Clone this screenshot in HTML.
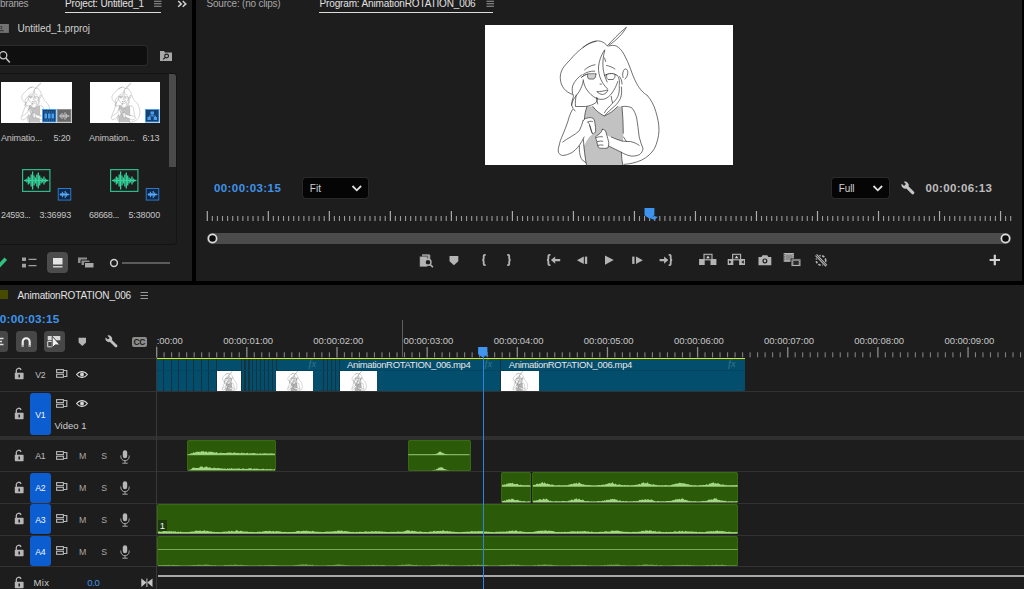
<!DOCTYPE html>
<html><head><meta charset="utf-8"><title>Premiere</title>
<style>
html,body{margin:0;padding:0;background:#1d1d1d;}
body{width:1024px;height:589px;overflow:hidden;position:relative;font-family:"Liberation Sans",sans-serif;}
#r{position:absolute;left:0;top:0;width:1024px;height:589px;overflow:hidden;background:#1d1d1d;}
#r div,#r svg,#r span{position:absolute;display:block;}
#r .t{white-space:nowrap;}
#r .c{overflow:hidden;}
</style></head><body><div id="r">
<div style="left:192px;top:0px;width:4px;height:283px;background:#000;"></div>
<div style="left:0px;top:281px;width:1024px;height:4px;background:#000;"></div>
<div style="left:1022px;top:0px;width:2px;height:283px;background:#000;"></div>
<span id="t1" class="t" style="left:-7.2px;top:-3.10px;font-size:10px;line-height:14px;color:#a6a6a6;font-weight:400;letter-spacing:-0.318px;">Libraries</span>
<span id="t2" class="t" style="left:65px;top:-3.10px;font-size:10px;line-height:14px;color:#e2e2e2;font-weight:400;letter-spacing:-0.143px;">Project: Untitled_1</span>
<div style="left:65px;top:11.6px;width:95.5px;height:1.5px;background:#dcdcdc;"></div>
<svg style="left:153.8px;top:0px;" width="8" height="8" viewBox="0 0 8 8"><path d="M0 1.300h7.500M0 3.800h7.500M0 6.300h7.500" stroke="#9a9a9a" stroke-width="1.100"/></svg>
<svg style="left:176px;top:0px;" width="12" height="9" viewBox="0 0 12 9"><path d="M2.200 1l3.100 2.900-3.100 2.900M6.700 1l3.100 2.900-3.100 2.900" stroke="#d0d0d0" stroke-width="1.500" fill="none"/></svg>
<svg style="left:-2px;top:24px;" width="11" height="9" viewBox="0 0 11 9"><path d="M0 0h10.900v8.900H0z" fill="#727272"/><path d="M2 6.700h3.800" stroke="#2a2a2a" stroke-width="0.900"/><path d="M2.300 2.500h1.500v2h-1.500" stroke="#2a2a2a" stroke-width="0.700" fill="none"/></svg>
<span id="t3" class="t" style="left:17.5px;top:22.30px;font-size:10px;line-height:14px;color:#cfcfcf;font-weight:400;letter-spacing:-0.051px;">Untitled_1.prproj</span>
<div style="left:-6px;top:46px;width:153px;height:19px;background:#0f0f0f;border-radius:3px;box-shadow:0 0 0 1px #2b2b2b;"></div>
<svg style="left:-1px;top:49.8px;" width="13" height="14" viewBox="0 0 13 14"><circle cx="4.2" cy="5.2" r="3.6" fill="none" stroke="#c8c8c8" stroke-width="1.3"/><path d="M6.8 8l4 4.4" stroke="#c8c8c8" stroke-width="1.5"/></svg>
<svg style="left:159.3px;top:49.6px;" width="14" height="12" viewBox="0 0 14 12"><path d="M1 1h4l1 1.5h7v8.5H1z" fill="#a8a8a8"/><circle cx="7.6" cy="6" r="1.9" fill="none" stroke="#1d1d1d" stroke-width="1.1"/><path d="M6.2 7.4l-2 2" stroke="#1d1d1d" stroke-width="1.2"/></svg>
<div style="left:-4px;top:73.2px;width:179.3px;height:170px;background:#1d1d1d;border:1px solid #131313;border-radius:0 3.5px 3.5px 0;"></div>
<div style="left:169px;top:74.2px;width:6.8px;height:93px;background:#4a4a4a;border-radius:0 3px 0 0;"></div>
<svg style="left:0.8px;top:82px;background:#fff;" width="71.2" height="41" viewBox="3 0 248 140"><rect width="248" height="140" fill="#fff"/>
<path d="M102 81.500c-1.500 4-2.500 8.500-2.500 12.700c-.800 7-1.300 13.500-1.300 20.400c.500 9 1.700 17 3.200 25.400h36.300c-.700-4.200-1.300-8.300-1.300-12.500c1.200-6.500 1.900-13 1.900-19.300c0-9-.500-18-1.300-26.700h-4.400c-3.500 4-8.200 7.300-13.400 9.500c-4.300-2.300-8.400-5.500-11.500-9.500z" fill="#c2c2c2"/>
<path d="M98.200 95.500c.800-1.500 2-2.200 3.500-2.300c2.300-.800 4.700-.800 6.500.200c1.200 1.500 1.700 3.500 1.800 5.500c.500 2.500.800 5 .600 7.500c-.500 1.300-1.500 2.200-2.800 2.500l-3.500 3l-3 4.500l-2.500 4.800l-2-9z" fill="#fff"/>
<path d="M117.300 104.500c1-.500 2.200 0 3 1.200c.800 1.500 1.200 3 1.500 4.500l4.400 1.800c3.500 1.500 7 3 10.800 4l1.800 2l-2.400 9.300c-4-2-8.500-4.200-12.700-6.300l-.900 2c-2 .500-4 .500-6 .200c-1.300.300-2.700 0-3.500-1c-.800-2-1.300-4-1.500-6c-.500-1.200-1-2.500-1.200-3.800c.300-1.200 1.200-2 2.500-2.500c1.200-.800 2.500-2 3.400-3.400z" fill="#fff"/>
<g fill="none" stroke="#787878" stroke-width="1.050" stroke-linecap="round" stroke-linejoin="round">
<!-- ahoge -->
<path d="M122.400 20.800c5-5.500 11.500-12.500 19-18.600c-3.500 6.500-9.500 12.500-17 17.800"/>
<!-- hair left outer -->
<path d="M122.400 21c-3.500-4.500-8-5.500-11.400-5c-5 .800-9.500 3.500-12.800 6.300c-5 3.800-9.200 7.800-12.700 12.100c-3.200 3.500-6 6.300-7.700 8.900c-2 3.500-2.700 7-2.500 10.200c.200 4 1.500 7.400 3.700 10.200c2 2.500 5 4.500 8.400 5.700"/>
<path d="M98.200 22.300c4-3 8-5 12.800-6"/>
<!-- hair right outer, long -->
<path d="M123.700 21c2.500-.800 5.500-.800 7.600 0c3 1.500 5.500 4.500 7.700 8.300c2.500 4.500 4.500 9.300 6.300 14c1.800 5.200 3.700 10.300 6.400 15.300c3 5.500 7 10 10.200 11.400c4 4.500 7.200 10.300 8.900 16.500c1.800 6 3.300 12.500 3.200 19.100c-.300 6.500-2 12.700-4.500 17.900c-3 5-7.500 8.800-12.700 11.500c-5.500 2.500-11.500 4-17.800 4.400"/>
<!-- fringe -->
<path d="M119.200 25.500c-3 4.500-5.200 10.500-5.700 16.500c-.200 4.500.700 8.800 2.500 12.700c1.500 3.500 3.800 6.500 6.400 9"/>
<path d="M119.800 25c-1.500 6-2.300 11.500-1.800 17.500c.500 5 2 10 4.200 14.500"/>
<path d="M119.500 33l1.200 3.500M121.500 40.500c3 .5 6 1.700 8.500 3.500"/>
<!-- brow arcs -->
<path d="M99.500 45c2.500-2.500 6-4.500 10.500-5.300M98.200 49.500c3-2.300 7-3.500 11.500-3.400"/>
<!-- face -->
<path d="M98.200 54.700c.500 4 1.800 7.500 3.800 10.300c2.500 3.500 5.500 6.300 9 8.200c2.500 1.200 5.500 1.500 8.500.800c3-1 5.500-3.300 7.500-6c2.500-3.500 4.500-7.500 5.800-11.500"/>
<!-- eyes -->
<path d="M96.500 52.300c2-1.800 4.500-3 7-3.300h7.500" stroke-width="1"/>
<path d="M102.800 49.500c-.700 1.700-.300 3.500 1 4.500h5c1.500-1 2.200-2.800 2-4.700" fill="#d0d0d0"/>
<path d="M119.500 50.500c2-1.300 4.500-2 7-2c2.500.2 4.800 1 6.500 2.700" stroke-width="0.900"/>
<path d="M121.700 50c-.500 1.800 0 3.500 1.300 4.500h5c1.500-.800 2.200-2.500 2-4.300"/>
<path d="M115 59l1.500.2"/>
<!-- mouth -->
<path d="M112.200 66.800c3.500-.2 7.200-.8 10.800-2c-.800 2.500-2.800 4.300-5.500 4.700c-2.200-.2-4-1.200-5.300-2.700z"/>
<!-- ear -->
<path d="M138 52.500c-.800-3-.300-6.500 1.500-8.200c1.500-1 3 .2 3.300 2.500c.2 2.500-.800 5.500-2.800 7.300"/>
<path d="M134.500 51.500c1.500 2 2.500 4.500 2.500 7.500M133.500 52.500c1 2.500 1.300 5 .8 7.500"/>
<!-- left hair locks -->
<path d="M97 49.700c-4 2.500-7.500 6.500-9.300 11c-1 3.500-.500 7 .800 10.500c-1 3-1.800 6-1.900 9c.8 2.300 2 4.300 3.400 5.800"/>
<path d="M98.200 56c-.500 3.500-2 7-3.800 10.200c-2 3-4 5.500-5.800 8c-1 2-1.800 4-2 6"/>
<path d="M91.200 70c-.700 3.800-1 7.700-.700 11.500h10.200c4-.5 7.800-2 10.300-3.900c.8-1.500 1.300-3 1.500-4.500"/>
<!-- neck -->
<path d="M111.600 72.500c.2 2.200.600 4.500 1.200 6.500M126.200 71.300c.2 2.200.600 4.300 1.300 6.300"/>
<!-- front strand over chest (double) -->
<path d="M136.400 62c.5 4 .3 8-1 11.500c-1.300 3-3.300 5.300-5.800 7.700c-3.500 3-7 6-9.800 9.200"/>
<path d="M134.300 61c.3 4-.200 7.500-1.500 10.500c-1.300 2.800-3.500 5.200-6 7.500c-2.800 2.700-5.500 5.500-7.400 8.800"/>
<!-- top outlines -->
<path d="M107.700 81.500c3 4 7.200 7.200 11.500 9.500c5.200-2.200 9.900-5.500 13.400-9.500"/>
<path d="M102 81.500c-1.500 4-2.500 8.500-2.500 12.700M137 81.500c.8 8.700 1.300 17.700 1.300 26.700"/>
<path d="M98.400 114.600c.5 9 1.600 17 3 25.200M136.400 127.300c0 4.200.6 8.300 1.300 12.500"/>
<!-- left arm -->
<path d="M87.400 84.600c-2 3.500-3.500 7.500-4.500 11.800c-1.500 4.500-3.300 9-5.100 13.300c-1.800 4-3.200 7.800-3.800 11.300c-.800 2.500-.900 4.700-.600 6.300c1 2 2.500 3 4.400 3.200c3.300-.2 6.500-1.500 9.600-3.200c3.500-2.500 6.700-6.200 9.200-10.500l2.500-4.800"/>
<path d="M98.200 95.500c-1 3.500-2.300 7-3.800 10.100c-2.500 2.500-5.500 4.500-8.800 6.300c-3 1.700-5.700 3.500-7.800 5.100"/>
<!-- left fist -->
<path d="M98.200 95.500c.8-1.500 2-2.200 3.500-2.300c2.300-.8 4.700-.8 6.500.2c1.200 1.500 1.700 3.500 1.800 5.500c.5 2.500.8 5 .6 7.500c-.5 1.300-1.500 2.200-2.800 2.500c-1-1.500-1.700-3.500-2-5.500c-.5-2.200-1.300-4.300-2.500-6"/>
<path d="M102.500 97c1.500-.8 3.500-1 5-.5M104.500 100.500l2.500 7.500"/>
<!-- right arm -->
<path d="M137.700 81.500c3-.5 6.200 0 8.900 1.200c2.500 2.500 4 6.200 5.100 10.300c1 6 1.700 12.500 2.500 19c1 4 2.400 8 3.800 11.500c-.2 2.700-1.700 4.800-3.800 6.300c-2.300 1-4.800 1.300-7.600 1.300c-3.500-.5-7-1.900-10.200-3.800c-4-2-8.500-4.200-12.700-6.300"/>
<path d="M126.200 112c3.500 1.500 7 3 10.800 4c3 .5 6 .5 8.800.6c3 .8 6 2 8.400 3.700M138.500 112l3 4.500"/>
<!-- right fist -->
<path d="M117.300 104.500c1-.5 2.200 0 3 1.200c.8 1.500 1.200 3 1.500 4.500c.8 2.500 1.500 5 2 7.500c0 2-.3 3.800-1 5.300c-2 .5-4 .5-6 .2c-1.300.3-2.700 0-3.500-1c-.8-2-1.300-4-1.500-6c-.5-1.200-1-2.500-1.200-3.800c.3-1.200 1.200-2 2.500-2.500c1.200-.8 2.500-2 3.400-3.400c.2-.8.500-1.500.8-2z"/>
<path d="M111.500 112.500c2-.8 4-1 6-.7M112.500 116.500c1.800-.5 3.600-.6 5.300-.3M113 120.300c1.700-.4 3.500-.5 5-.2"/>
<!-- hair behind left -->
<path d="M94.400 121c-.3 4.500.2 9 1.900 12.700c1.200 1.800 2.700 3 4.400 3.800"/>
</g>
</svg>
<svg style="left:89.6px;top:82px;background:#fff;" width="70.4" height="41" viewBox="-2 0 248 140"><rect width="248" height="140" fill="#fff"/>
<path d="M102 81.500c-1.500 4-2.500 8.500-2.500 12.700c-.800 7-1.300 13.500-1.300 20.400c.500 9 1.700 17 3.200 25.400h36.300c-.700-4.200-1.300-8.300-1.300-12.500c1.200-6.500 1.900-13 1.900-19.300c0-9-.500-18-1.300-26.700h-4.400c-3.500 4-8.200 7.300-13.400 9.500c-4.300-2.300-8.400-5.500-11.500-9.500z" fill="#c2c2c2"/>
<path d="M98.200 95.500c.800-1.500 2-2.200 3.500-2.300c2.300-.800 4.700-.800 6.500.200c1.200 1.500 1.700 3.500 1.800 5.500c.500 2.500.800 5 .600 7.500c-.500 1.300-1.500 2.200-2.800 2.500l-3.500 3l-3 4.500l-2.500 4.800l-2-9z" fill="#fff"/>
<path d="M117.300 104.500c1-.500 2.200 0 3 1.200c.800 1.500 1.200 3 1.500 4.500l4.400 1.800c3.500 1.500 7 3 10.800 4l1.800 2l-2.400 9.300c-4-2-8.500-4.200-12.700-6.300l-.900 2c-2 .500-4 .500-6 .200c-1.300.300-2.700 0-3.500-1c-.800-2-1.300-4-1.500-6c-.500-1.200-1-2.500-1.200-3.800c.300-1.200 1.200-2 2.500-2.500c1.200-.800 2.500-2 3.400-3.400z" fill="#fff"/>
<g fill="none" stroke="#787878" stroke-width="1.050" stroke-linecap="round" stroke-linejoin="round">
<!-- ahoge -->
<path d="M122.400 20.800c5-5.500 11.500-12.500 19-18.600c-3.500 6.500-9.500 12.500-17 17.800"/>
<!-- hair left outer -->
<path d="M122.400 21c-3.500-4.500-8-5.500-11.400-5c-5 .800-9.500 3.500-12.800 6.300c-5 3.800-9.200 7.800-12.700 12.100c-3.200 3.500-6 6.300-7.700 8.900c-2 3.500-2.700 7-2.500 10.200c.200 4 1.500 7.400 3.700 10.200c2 2.500 5 4.500 8.400 5.700"/>
<path d="M98.200 22.300c4-3 8-5 12.800-6"/>
<!-- hair right outer, long -->
<path d="M123.700 21c2.500-.800 5.500-.800 7.600 0c3 1.500 5.500 4.500 7.700 8.300c2.500 4.500 4.500 9.300 6.300 14c1.800 5.200 3.700 10.300 6.400 15.300c3 5.500 7 10 10.200 11.400c4 4.500 7.200 10.300 8.900 16.500c1.800 6 3.300 12.500 3.200 19.100c-.300 6.500-2 12.700-4.500 17.900c-3 5-7.500 8.800-12.700 11.500c-5.500 2.500-11.500 4-17.800 4.400"/>
<!-- fringe -->
<path d="M119.200 25.500c-3 4.500-5.200 10.500-5.700 16.500c-.200 4.500.700 8.800 2.500 12.700c1.500 3.500 3.800 6.500 6.400 9"/>
<path d="M119.800 25c-1.500 6-2.300 11.500-1.800 17.500c.500 5 2 10 4.200 14.500"/>
<path d="M119.500 33l1.200 3.500M121.500 40.500c3 .5 6 1.700 8.500 3.500"/>
<!-- brow arcs -->
<path d="M99.500 45c2.500-2.500 6-4.500 10.500-5.300M98.200 49.500c3-2.300 7-3.500 11.500-3.400"/>
<!-- face -->
<path d="M98.200 54.700c.500 4 1.800 7.500 3.800 10.300c2.500 3.500 5.500 6.300 9 8.200c2.500 1.200 5.500 1.500 8.500.800c3-1 5.500-3.300 7.500-6c2.500-3.500 4.500-7.500 5.800-11.500"/>
<!-- eyes -->
<path d="M96.500 52.300c2-1.800 4.500-3 7-3.300h7.500" stroke-width="1"/>
<path d="M102.800 49.500c-.700 1.700-.300 3.500 1 4.500h5c1.500-1 2.200-2.800 2-4.700" fill="#d0d0d0"/>
<path d="M119.500 50.500c2-1.300 4.500-2 7-2c2.500.2 4.800 1 6.500 2.700" stroke-width="0.900"/>
<path d="M121.700 50c-.500 1.800 0 3.500 1.300 4.500h5c1.500-.800 2.200-2.500 2-4.300"/>
<path d="M115 59l1.500.2"/>
<!-- mouth -->
<path d="M112.200 66.800c3.500-.2 7.200-.8 10.800-2c-.800 2.500-2.800 4.300-5.500 4.700c-2.200-.2-4-1.200-5.300-2.700z"/>
<!-- ear -->
<path d="M138 52.500c-.800-3-.300-6.500 1.500-8.200c1.500-1 3 .2 3.300 2.500c.2 2.500-.800 5.500-2.800 7.300"/>
<path d="M134.500 51.500c1.500 2 2.500 4.500 2.500 7.500M133.500 52.500c1 2.500 1.300 5 .8 7.500"/>
<!-- left hair locks -->
<path d="M97 49.700c-4 2.500-7.500 6.500-9.300 11c-1 3.500-.500 7 .800 10.500c-1 3-1.800 6-1.900 9c.8 2.300 2 4.300 3.400 5.800"/>
<path d="M98.200 56c-.500 3.500-2 7-3.800 10.200c-2 3-4 5.500-5.800 8c-1 2-1.800 4-2 6"/>
<path d="M91.200 70c-.700 3.800-1 7.700-.700 11.500h10.200c4-.5 7.800-2 10.300-3.900c.8-1.500 1.300-3 1.500-4.500"/>
<!-- neck -->
<path d="M111.600 72.500c.2 2.200.600 4.500 1.200 6.500M126.200 71.300c.2 2.200.600 4.300 1.300 6.300"/>
<!-- front strand over chest (double) -->
<path d="M136.400 62c.5 4 .3 8-1 11.500c-1.300 3-3.300 5.300-5.800 7.700c-3.500 3-7 6-9.800 9.200"/>
<path d="M134.300 61c.3 4-.200 7.500-1.500 10.500c-1.300 2.800-3.500 5.200-6 7.500c-2.800 2.700-5.500 5.500-7.400 8.800"/>
<!-- top outlines -->
<path d="M107.700 81.500c3 4 7.200 7.200 11.500 9.500c5.200-2.200 9.900-5.500 13.400-9.500"/>
<path d="M102 81.500c-1.500 4-2.500 8.500-2.500 12.700M137 81.500c.8 8.700 1.300 17.700 1.300 26.700"/>
<path d="M98.400 114.600c.5 9 1.600 17 3 25.200M136.400 127.300c0 4.200.6 8.300 1.300 12.500"/>
<!-- left arm -->
<path d="M87.400 84.600c-2 3.500-3.500 7.500-4.500 11.800c-1.500 4.500-3.300 9-5.100 13.300c-1.800 4-3.200 7.800-3.800 11.300c-.800 2.500-.900 4.700-.600 6.300c1 2 2.500 3 4.400 3.200c3.300-.2 6.500-1.500 9.600-3.200c3.500-2.500 6.700-6.200 9.200-10.500l2.500-4.800"/>
<path d="M98.200 95.500c-1 3.500-2.300 7-3.800 10.100c-2.500 2.500-5.500 4.500-8.800 6.300c-3 1.700-5.700 3.500-7.800 5.100"/>
<!-- left fist -->
<path d="M98.200 95.500c.8-1.500 2-2.200 3.500-2.300c2.300-.8 4.700-.8 6.500.2c1.200 1.500 1.700 3.500 1.800 5.500c.5 2.500.8 5 .6 7.500c-.5 1.300-1.500 2.200-2.800 2.500c-1-1.500-1.700-3.500-2-5.500c-.5-2.200-1.300-4.300-2.500-6"/>
<path d="M102.500 97c1.500-.8 3.500-1 5-.5M104.500 100.500l2.500 7.500"/>
<!-- right arm -->
<path d="M137.700 81.500c3-.5 6.200 0 8.900 1.200c2.500 2.500 4 6.200 5.100 10.300c1 6 1.700 12.500 2.500 19c1 4 2.400 8 3.800 11.500c-.2 2.700-1.700 4.800-3.800 6.300c-2.300 1-4.800 1.300-7.600 1.300c-3.500-.5-7-1.900-10.200-3.800c-4-2-8.500-4.200-12.700-6.300"/>
<path d="M126.200 112c3.500 1.500 7 3 10.800 4c3 .5 6 .5 8.800.6c3 .8 6 2 8.400 3.700M138.500 112l3 4.500"/>
<!-- right fist -->
<path d="M117.300 104.500c1-.5 2.200 0 3 1.200c.8 1.500 1.200 3 1.500 4.500c.8 2.500 1.500 5 2 7.500c0 2-.3 3.800-1 5.300c-2 .5-4 .5-6 .2c-1.300.3-2.700 0-3.500-1c-.8-2-1.300-4-1.500-6c-.5-1.200-1-2.500-1.200-3.800c.3-1.200 1.200-2 2.500-2.500c1.200-.8 2.500-2 3.400-3.400c.2-.8.500-1.500.8-2z"/>
<path d="M111.500 112.500c2-.8 4-1 6-.7M112.500 116.500c1.800-.5 3.600-.6 5.300-.3M113 120.300c1.700-.4 3.500-.5 5-.2"/>
<!-- hair behind left -->
<path d="M94.400 121c-.3 4.500.2 9 1.900 12.700c1.200 1.800 2.700 3 4.400 3.800"/>
</g>
</svg>
<svg style="left:42px;top:109px;" width="15" height="14" viewBox="0 0 15 14"><rect x="0.5" y="0.5" width="13.5" height="12.5" fill="#17406e" stroke="#4aa0f0" stroke-width="1"/><path d="M2.5 4.5h2.6v5h-2.6zM6 4.5h2.6v5H6zM9.5 4.5h2.6v5H9.5z" fill="#4aa0f0"/><path d="M2.5 3h9.6M2.5 11h9.6" stroke="#4aa0f0" stroke-width="0.8" stroke-dasharray="1.2 1"/></svg>
<svg style="left:57px;top:109px;" width="15" height="14" viewBox="0 0 15 14"><rect x="0.5" y="0.5" width="13.5" height="12.5" fill="#6a6a6a" stroke="#909090" stroke-width="1"/><path d="M2 7h10.5M3.5 5.5v3M5 4v6M6.5 5.5v3M8 3.2v7.6M9.5 4.8v4.4M11 6v2" stroke="#bdbdbd" stroke-width="1.1"/></svg>
<svg style="left:145px;top:109px;" width="15" height="14" viewBox="0 0 15 14"><rect x="0.5" y="0.5" width="13.5" height="12.5" fill="#17406e" stroke="#4aa0f0" stroke-width="1"/><path d="M5.5 2.5h3.5v3H5.5zM2.5 8h3.3v3H2.5zM8.7 8H12v3H8.7z" fill="#4aa0f0"/><path d="M7.2 5.5v1.5M4.2 8V7h6.2v1" stroke="#4aa0f0" stroke-width="0.9" fill="none"/></svg>
<span id="t4" class="t" style="left:1px;top:131.50px;font-size:9px;line-height:13px;color:#c4c4c4;font-weight:400;letter-spacing:-0.139px;">Animatio...</span>
<span id="t5" class="t" style="left:53.5px;top:131.50px;font-size:9px;line-height:13px;color:#c4c4c4;font-weight:400;letter-spacing:-0.133px;">5:20</span>
<span id="t6" class="t" style="left:89px;top:131.50px;font-size:9px;line-height:13px;color:#c4c4c4;font-weight:400;letter-spacing:-0.128px;">Animation...</span>
<span id="t7" class="t" style="left:142.5px;top:131.50px;font-size:9px;line-height:13px;color:#c4c4c4;font-weight:400;letter-spacing:-0.133px;">6:13</span>
<svg style="left:22px;top:169px;" width="29" height="23" viewBox="0 0 29 23"><rect x="0.6" y="0.6" width="27.3" height="21.8" fill="none" stroke="#2fb98a" stroke-width="1.2"/><path d="M3.50 10.5v2" stroke="#35d39c" stroke-width="1.3"/><path d="M4.92 9.5v4" stroke="#35d39c" stroke-width="1.3"/><path d="M6.34 7.5v8" stroke="#35d39c" stroke-width="1.3"/><path d="M7.76 8.5v6" stroke="#35d39c" stroke-width="1.3"/><path d="M9.18 5.5v12" stroke="#35d39c" stroke-width="1.3"/><path d="M10.60 2.5v18" stroke="#35d39c" stroke-width="1.3"/><path d="M12.02 6.5v10" stroke="#35d39c" stroke-width="1.3"/><path d="M13.44 8.5v6" stroke="#35d39c" stroke-width="1.3"/><path d="M14.86 5.5v12" stroke="#35d39c" stroke-width="1.3"/><path d="M16.28 3.5v16" stroke="#35d39c" stroke-width="1.3"/><path d="M17.70 6.5v10" stroke="#35d39c" stroke-width="1.3"/><path d="M19.12 8.5v6" stroke="#35d39c" stroke-width="1.3"/><path d="M20.54 9.5v4" stroke="#35d39c" stroke-width="1.3"/><path d="M21.96 7.5v8" stroke="#35d39c" stroke-width="1.3"/><path d="M23.38 9.5v4" stroke="#35d39c" stroke-width="1.3"/><path d="M24.80 10.5v2" stroke="#35d39c" stroke-width="1.3"/><path d="M2 11.5h24.5" stroke="#35d39c" stroke-width="1"/></svg>
<svg style="left:110px;top:169px;" width="29" height="23" viewBox="0 0 29 23"><rect x="0.6" y="0.6" width="27.3" height="21.8" fill="none" stroke="#2fb98a" stroke-width="1.2"/><path d="M3.50 10.5v2" stroke="#35d39c" stroke-width="1.3"/><path d="M4.92 9.5v4" stroke="#35d39c" stroke-width="1.3"/><path d="M6.34 7.5v8" stroke="#35d39c" stroke-width="1.3"/><path d="M7.76 8.5v6" stroke="#35d39c" stroke-width="1.3"/><path d="M9.18 5.5v12" stroke="#35d39c" stroke-width="1.3"/><path d="M10.60 2.5v18" stroke="#35d39c" stroke-width="1.3"/><path d="M12.02 6.5v10" stroke="#35d39c" stroke-width="1.3"/><path d="M13.44 8.5v6" stroke="#35d39c" stroke-width="1.3"/><path d="M14.86 5.5v12" stroke="#35d39c" stroke-width="1.3"/><path d="M16.28 3.5v16" stroke="#35d39c" stroke-width="1.3"/><path d="M17.70 6.5v10" stroke="#35d39c" stroke-width="1.3"/><path d="M19.12 8.5v6" stroke="#35d39c" stroke-width="1.3"/><path d="M20.54 9.5v4" stroke="#35d39c" stroke-width="1.3"/><path d="M21.96 7.5v8" stroke="#35d39c" stroke-width="1.3"/><path d="M23.38 9.5v4" stroke="#35d39c" stroke-width="1.3"/><path d="M24.80 10.5v2" stroke="#35d39c" stroke-width="1.3"/><path d="M2 11.5h24.5" stroke="#35d39c" stroke-width="1"/></svg>
<svg style="left:56.8px;top:187.5px;" width="15" height="13" viewBox="0 0 14.5 14"><rect x="0.5" y="0.5" width="13.5" height="12.5" fill="#0c2748" stroke="#2f7fd6" stroke-width="1"/><path d="M2 7h10.5M3.5 5.5v3M5 4v6M6.5 5.5v3M8 3.2v7.6M9.5 4.8v4.4M11 6v2" stroke="#5aa8f5" stroke-width="1.1"/></svg>
<svg style="left:145.3px;top:187.5px;" width="15" height="13" viewBox="0 0 14.5 14"><rect x="0.5" y="0.5" width="13.5" height="12.5" fill="#0c2748" stroke="#2f7fd6" stroke-width="1"/><path d="M2 7h10.5M3.5 5.5v3M5 4v6M6.5 5.5v3M8 3.2v7.6M9.5 4.8v4.4M11 6v2" stroke="#5aa8f5" stroke-width="1.1"/></svg>
<span id="t8" class="t" style="left:1px;top:208.50px;font-size:9px;line-height:13px;color:#c4c4c4;font-weight:400;letter-spacing:-0.379px;">24593...</span>
<span id="t9" class="t" style="left:39.5px;top:208.50px;font-size:9px;line-height:13px;color:#c4c4c4;font-weight:400;letter-spacing:-0.150px;">3:36993</span>
<span id="t10" class="t" style="left:89px;top:208.50px;font-size:9px;line-height:13px;color:#c4c4c4;font-weight:400;letter-spacing:-0.316px;">68668...</span>
<span id="t11" class="t" style="left:128.5px;top:208.50px;font-size:9px;line-height:13px;color:#c4c4c4;font-weight:400;letter-spacing:-0.150px;">5:38000</span>
<svg style="left:-4px;top:254.5px;" width="13" height="14" viewBox="0 0 13 14"><path d="M0 11.500L8.500 2.500l2.600 2.500L3 13.500z" fill="#2ec27e"/></svg>
<svg style="left:22px;top:257px;" width="16" height="12" viewBox="0 0 16 12"><path d="M0 0.5h4v3.6H0zM0 6.8h4v3.6H0z" fill="#a0a0a0"/><path d="M6.5 2.3h8M6.5 8.6h8" stroke="#a0a0a0" stroke-width="1.3"/></svg>
<div style="left:47.3px;top:252.3px;width:21px;height:20.8px;background:#4c4c4c;border-radius:4px;"></div>
<svg style="left:52px;top:258px;" width="12" height="11" viewBox="0 0 12 11"><path d="M1 0h9.5v6.5H1z" fill="#e4e4e4"/><path d="M1 8.8h9.5" stroke="#e4e4e4" stroke-width="1.3"/></svg>
<svg style="left:78px;top:257px;" width="17" height="12" viewBox="0 0 17 12"><path d="M0 0.5h9v5.5H0z" fill="#8e8e8e"/><path d="M3 3h9v5.5H3z" fill="#8e8e8e" stroke="#1d1d1d" stroke-width="1"/><path d="M6.5 5.5h9.5V11H6.5z" fill="#a8a8a8" stroke="#1d1d1d" stroke-width="1"/></svg>
<div style="left:122px;top:262.3px;width:48px;height:1.4px;background:#5c5c5c;"></div>
<svg style="left:109px;top:258px;" width="10" height="10" viewBox="0 0 10 10"><circle cx="5" cy="5" r="3.4" fill="#1d1d1d" stroke="#cfcfcf" stroke-width="1.5"/></svg>
<span id="t12" class="t" style="left:206.5px;top:-3.10px;font-size:10px;line-height:14px;color:#a6a6a6;font-weight:400;letter-spacing:-0.212px;">Source: (no clips)</span>
<span id="t13" class="t" style="left:319.5px;top:-3.10px;font-size:10px;line-height:14px;color:#e2e2e2;font-weight:400;letter-spacing:-0.142px;">Program: AnimationROTATION_006</span>
<div style="left:319px;top:11.6px;width:174px;height:1.5px;background:#dcdcdc;"></div>
<svg style="left:486px;top:0px;" width="9" height="8" viewBox="0 0 9 8"><path d="M0.500 1.300h7.500M0.500 3.800h7.500M0.500 6.300h7.500" stroke="#9a9a9a" stroke-width="1.100"/></svg>
<svg style="left:485px;top:25px;" width="248" height="140" viewBox="0 0 248 140"><rect width="248" height="140" fill="#fff"/>
<path d="M102 81.500c-1.500 4-2.500 8.500-2.500 12.700c-.800 7-1.300 13.500-1.300 20.400c.500 9 1.700 17 3.200 25.400h36.300c-.700-4.200-1.300-8.300-1.300-12.500c1.200-6.500 1.900-13 1.900-19.300c0-9-.500-18-1.300-26.700h-4.400c-3.500 4-8.200 7.300-13.400 9.500c-4.300-2.300-8.400-5.500-11.500-9.500z" fill="#c2c2c2"/>
<path d="M98.200 95.500c.800-1.500 2-2.200 3.500-2.300c2.300-.800 4.700-.800 6.500.200c1.200 1.500 1.700 3.500 1.800 5.500c.500 2.500.800 5 .600 7.500c-.500 1.300-1.500 2.200-2.800 2.500l-3.500 3l-3 4.500l-2.500 4.800l-2-9z" fill="#fff"/>
<path d="M117.300 104.500c1-.500 2.200 0 3 1.200c.800 1.500 1.200 3 1.500 4.500l4.400 1.800c3.500 1.500 7 3 10.800 4l1.800 2l-2.400 9.300c-4-2-8.500-4.200-12.700-6.300l-.900 2c-2 .500-4 .500-6 .200c-1.300.300-2.700 0-3.500-1c-.800-2-1.300-4-1.500-6c-.500-1.200-1-2.500-1.200-3.800c.300-1.200 1.200-2 2.500-2.500c1.200-.800 2.500-2 3.400-3.400z" fill="#fff"/>
<g fill="none" stroke="#2e2e2e" stroke-width="0.680" stroke-linecap="round" stroke-linejoin="round">
<!-- ahoge -->
<path d="M122.400 20.800c5-5.500 11.500-12.500 19-18.600c-3.500 6.500-9.500 12.500-17 17.800"/>
<!-- hair left outer -->
<path d="M122.400 21c-3.500-4.500-8-5.500-11.400-5c-5 .800-9.500 3.500-12.800 6.300c-5 3.800-9.200 7.800-12.700 12.100c-3.200 3.500-6 6.300-7.700 8.900c-2 3.500-2.700 7-2.500 10.200c.200 4 1.500 7.400 3.700 10.200c2 2.500 5 4.500 8.400 5.700"/>
<path d="M98.200 22.300c4-3 8-5 12.800-6"/>
<!-- hair right outer, long -->
<path d="M123.700 21c2.500-.800 5.500-.800 7.600 0c3 1.500 5.500 4.500 7.700 8.300c2.500 4.500 4.500 9.300 6.300 14c1.800 5.200 3.700 10.300 6.400 15.300c3 5.500 7 10 10.200 11.400c4 4.500 7.200 10.300 8.900 16.500c1.800 6 3.300 12.500 3.200 19.100c-.300 6.500-2 12.700-4.500 17.900c-3 5-7.500 8.800-12.700 11.500c-5.500 2.500-11.500 4-17.800 4.400"/>
<!-- fringe -->
<path d="M119.200 25.500c-3 4.500-5.200 10.500-5.700 16.500c-.200 4.500.700 8.800 2.500 12.700c1.500 3.500 3.800 6.500 6.400 9"/>
<path d="M119.800 25c-1.500 6-2.300 11.500-1.800 17.500c.500 5 2 10 4.200 14.500"/>
<path d="M119.500 33l1.200 3.500M121.500 40.500c3 .5 6 1.700 8.500 3.500"/>
<!-- brow arcs -->
<path d="M99.500 45c2.500-2.500 6-4.500 10.500-5.300M98.200 49.500c3-2.300 7-3.500 11.500-3.400"/>
<!-- face -->
<path d="M98.200 54.700c.500 4 1.800 7.500 3.800 10.300c2.500 3.500 5.500 6.300 9 8.200c2.500 1.200 5.500 1.500 8.500.800c3-1 5.500-3.300 7.500-6c2.500-3.500 4.500-7.500 5.800-11.500"/>
<!-- eyes -->
<path d="M96.500 52.300c2-1.800 4.500-3 7-3.300h7.500" stroke-width="1"/>
<path d="M102.800 49.500c-.700 1.700-.300 3.500 1 4.500h5c1.500-1 2.200-2.800 2-4.700" fill="#d0d0d0"/>
<path d="M119.500 50.500c2-1.300 4.500-2 7-2c2.500.2 4.800 1 6.500 2.700" stroke-width="0.900"/>
<path d="M121.700 50c-.500 1.800 0 3.500 1.300 4.500h5c1.500-.800 2.200-2.500 2-4.300"/>
<path d="M115 59l1.500.2"/>
<!-- mouth -->
<path d="M112.200 66.800c3.500-.2 7.200-.8 10.800-2c-.800 2.500-2.800 4.300-5.500 4.700c-2.200-.2-4-1.200-5.300-2.700z"/>
<!-- ear -->
<path d="M138 52.500c-.800-3-.300-6.500 1.500-8.200c1.500-1 3 .2 3.300 2.500c.2 2.500-.800 5.500-2.800 7.300"/>
<path d="M134.500 51.500c1.500 2 2.500 4.500 2.500 7.500M133.500 52.500c1 2.500 1.300 5 .8 7.500"/>
<!-- left hair locks -->
<path d="M97 49.700c-4 2.500-7.500 6.500-9.300 11c-1 3.500-.500 7 .800 10.500c-1 3-1.800 6-1.900 9c.8 2.300 2 4.300 3.400 5.800"/>
<path d="M98.200 56c-.500 3.500-2 7-3.800 10.200c-2 3-4 5.500-5.800 8c-1 2-1.800 4-2 6"/>
<path d="M91.200 70c-.700 3.800-1 7.700-.700 11.500h10.200c4-.5 7.800-2 10.300-3.900c.8-1.500 1.300-3 1.500-4.500"/>
<!-- neck -->
<path d="M111.600 72.500c.2 2.200.600 4.500 1.200 6.500M126.200 71.300c.2 2.200.600 4.300 1.300 6.300"/>
<!-- front strand over chest (double) -->
<path d="M136.400 62c.5 4 .3 8-1 11.500c-1.300 3-3.300 5.300-5.800 7.700c-3.500 3-7 6-9.800 9.200"/>
<path d="M134.300 61c.3 4-.200 7.500-1.500 10.500c-1.300 2.800-3.500 5.200-6 7.500c-2.800 2.700-5.500 5.500-7.400 8.800"/>
<!-- top outlines -->
<path d="M107.700 81.500c3 4 7.200 7.200 11.500 9.500c5.200-2.200 9.900-5.500 13.400-9.500"/>
<path d="M102 81.500c-1.500 4-2.500 8.500-2.500 12.700M137 81.500c.8 8.700 1.300 17.700 1.300 26.700"/>
<path d="M98.400 114.600c.5 9 1.600 17 3 25.200M136.400 127.300c0 4.200.6 8.300 1.300 12.500"/>
<!-- left arm -->
<path d="M87.400 84.600c-2 3.500-3.500 7.500-4.500 11.800c-1.500 4.500-3.300 9-5.100 13.300c-1.800 4-3.200 7.800-3.800 11.300c-.800 2.500-.900 4.700-.600 6.300c1 2 2.500 3 4.400 3.200c3.300-.2 6.500-1.500 9.600-3.200c3.500-2.500 6.700-6.200 9.200-10.500l2.500-4.800"/>
<path d="M98.200 95.500c-1 3.500-2.300 7-3.800 10.100c-2.500 2.500-5.500 4.500-8.800 6.300c-3 1.700-5.700 3.500-7.800 5.100"/>
<!-- left fist -->
<path d="M98.200 95.500c.8-1.500 2-2.200 3.500-2.300c2.300-.8 4.700-.8 6.500.2c1.200 1.500 1.700 3.500 1.800 5.500c.5 2.500.8 5 .6 7.500c-.5 1.300-1.500 2.200-2.800 2.500c-1-1.500-1.700-3.500-2-5.500c-.5-2.200-1.300-4.300-2.500-6"/>
<path d="M102.500 97c1.500-.8 3.500-1 5-.5M104.500 100.500l2.500 7.500"/>
<!-- right arm -->
<path d="M137.700 81.500c3-.5 6.200 0 8.900 1.200c2.500 2.500 4 6.200 5.100 10.300c1 6 1.700 12.500 2.500 19c1 4 2.400 8 3.800 11.500c-.2 2.700-1.700 4.800-3.800 6.300c-2.300 1-4.800 1.300-7.600 1.300c-3.500-.5-7-1.900-10.200-3.800c-4-2-8.500-4.200-12.700-6.300"/>
<path d="M126.200 112c3.500 1.500 7 3 10.800 4c3 .5 6 .5 8.800.6c3 .8 6 2 8.400 3.700M138.500 112l3 4.500"/>
<!-- right fist -->
<path d="M117.300 104.500c1-.5 2.200 0 3 1.200c.8 1.500 1.200 3 1.500 4.500c.8 2.500 1.500 5 2 7.500c0 2-.3 3.800-1 5.300c-2 .5-4 .5-6 .2c-1.300.3-2.700 0-3.500-1c-.8-2-1.300-4-1.500-6c-.5-1.200-1-2.500-1.200-3.800c.3-1.200 1.200-2 2.500-2.500c1.200-.8 2.500-2 3.400-3.400c.2-.8.500-1.500.8-2z"/>
<path d="M111.500 112.500c2-.8 4-1 6-.7M112.500 116.500c1.800-.5 3.600-.6 5.300-.3M113 120.300c1.700-.4 3.500-.5 5-.2"/>
<!-- hair behind left -->
<path d="M94.400 121c-.3 4.500.2 9 1.900 12.700c1.200 1.800 2.700 3 4.400 3.800"/>
</g>
</svg>
<span id="t14" class="t" style="left:214px;top:180.95px;font-size:11.5px;line-height:15.5px;color:#3f94ea;font-weight:700;letter-spacing:0.413px;">00:00:03:15</span>
<div style="left:302.5px;top:178.2px;width:65.7px;height:19.8px;background:#050505;border-radius:3px;box-shadow:0 0 0 1px #2a2a2a;"></div>
<span id="t15" class="t" style="left:309.8px;top:181.60px;font-size:10px;line-height:14px;color:#d0d0d0;font-weight:400;letter-spacing:0.097px;">Fit</span>
<svg style="left:351px;top:184px;" width="12" height="9" viewBox="0 0 12 9"><path d="M1.5 2l4.3 4.3L10.1 2" stroke="#e0e0e0" stroke-width="1.8" fill="none"/></svg>
<div style="left:831.5px;top:178.2px;width:57.5px;height:19.8px;background:#050505;border-radius:3px;box-shadow:0 0 0 1px #2a2a2a;"></div>
<span id="t16" class="t" style="left:838.7px;top:181.60px;font-size:10px;line-height:14px;color:#d0d0d0;font-weight:400;letter-spacing:-0.081px;">Full</span>
<svg style="left:871.5px;top:184px;" width="12" height="9" viewBox="0 0 12 9"><path d="M1.5 2l4.3 4.3L10.1 2" stroke="#e0e0e0" stroke-width="1.8" fill="none"/></svg>
<svg style="left:900.5px;top:181px;" width="14" height="14" viewBox="0 0 14 14"><g transform="rotate(-45 7 7)"><circle cx="7" cy="2.9" r="3.5" fill="#c6c6c6"/><rect x="5.500" y="4" width="3" height="11.300" rx="1.400" fill="#c6c6c6"/><rect x="5.700" y="-1.500" width="2.600" height="4.300" fill="#1d1d1d"/></g></svg>
<span id="t17" class="t" style="left:925.5px;top:180.95px;font-size:11.5px;line-height:15.5px;color:#bdbdbd;font-weight:700;letter-spacing:0.377px;">00:00:06:13</span>
<svg style="left:0px;top:0px;" width="1024" height="230" viewBox="0 0 1024 230"><rect x="206.70" y="211" width="1.200" height="10" fill="#ababab"/><rect x="211.79" y="216" width="1.100" height="5" fill="#9a9a9a"/><rect x="216.87" y="216" width="1.100" height="5" fill="#9a9a9a"/><rect x="221.96" y="216" width="1.100" height="5" fill="#9a9a9a"/><rect x="227.04" y="216" width="1.100" height="5" fill="#9a9a9a"/><rect x="232.13" y="216" width="1.100" height="5" fill="#9a9a9a"/><rect x="237.21" y="216" width="1.100" height="5" fill="#9a9a9a"/><rect x="242.30" y="216" width="1.100" height="5" fill="#9a9a9a"/><rect x="247.38" y="216" width="1.100" height="5" fill="#9a9a9a"/><rect x="252.47" y="216" width="1.100" height="5" fill="#9a9a9a"/><rect x="257.55" y="216" width="1.100" height="5" fill="#9a9a9a"/><rect x="262.63" y="216" width="1.100" height="5" fill="#9a9a9a"/><rect x="267.72" y="211" width="1.200" height="10" fill="#ababab"/><rect x="272.81" y="216" width="1.100" height="5" fill="#9a9a9a"/><rect x="277.89" y="216" width="1.100" height="5" fill="#9a9a9a"/><rect x="282.98" y="216" width="1.100" height="5" fill="#9a9a9a"/><rect x="288.06" y="216" width="1.100" height="5" fill="#9a9a9a"/><rect x="293.14" y="216" width="1.100" height="5" fill="#9a9a9a"/><rect x="298.23" y="216" width="1.100" height="5" fill="#9a9a9a"/><rect x="303.31" y="216" width="1.100" height="5" fill="#9a9a9a"/><rect x="308.40" y="216" width="1.100" height="5" fill="#9a9a9a"/><rect x="313.49" y="216" width="1.100" height="5" fill="#9a9a9a"/><rect x="318.57" y="216" width="1.100" height="5" fill="#9a9a9a"/><rect x="323.65" y="216" width="1.100" height="5" fill="#9a9a9a"/><rect x="328.74" y="211" width="1.200" height="10" fill="#ababab"/><rect x="333.82" y="216" width="1.100" height="5" fill="#9a9a9a"/><rect x="338.91" y="216" width="1.100" height="5" fill="#9a9a9a"/><rect x="344.00" y="216" width="1.100" height="5" fill="#9a9a9a"/><rect x="349.08" y="216" width="1.100" height="5" fill="#9a9a9a"/><rect x="354.16" y="216" width="1.100" height="5" fill="#9a9a9a"/><rect x="359.25" y="216" width="1.100" height="5" fill="#9a9a9a"/><rect x="364.33" y="216" width="1.100" height="5" fill="#9a9a9a"/><rect x="369.42" y="216" width="1.100" height="5" fill="#9a9a9a"/><rect x="374.50" y="216" width="1.100" height="5" fill="#9a9a9a"/><rect x="379.59" y="216" width="1.100" height="5" fill="#9a9a9a"/><rect x="384.67" y="216" width="1.100" height="5" fill="#9a9a9a"/><rect x="389.76" y="211" width="1.200" height="10" fill="#ababab"/><rect x="394.85" y="216" width="1.100" height="5" fill="#9a9a9a"/><rect x="399.93" y="216" width="1.100" height="5" fill="#9a9a9a"/><rect x="405.01" y="216" width="1.100" height="5" fill="#9a9a9a"/><rect x="410.10" y="216" width="1.100" height="5" fill="#9a9a9a"/><rect x="415.18" y="216" width="1.100" height="5" fill="#9a9a9a"/><rect x="420.27" y="216" width="1.100" height="5" fill="#9a9a9a"/><rect x="425.36" y="216" width="1.100" height="5" fill="#9a9a9a"/><rect x="430.44" y="216" width="1.100" height="5" fill="#9a9a9a"/><rect x="435.52" y="216" width="1.100" height="5" fill="#9a9a9a"/><rect x="440.61" y="216" width="1.100" height="5" fill="#9a9a9a"/><rect x="445.69" y="216" width="1.100" height="5" fill="#9a9a9a"/><rect x="450.78" y="211" width="1.200" height="10" fill="#ababab"/><rect x="455.87" y="216" width="1.100" height="5" fill="#9a9a9a"/><rect x="460.95" y="216" width="1.100" height="5" fill="#9a9a9a"/><rect x="466.03" y="216" width="1.100" height="5" fill="#9a9a9a"/><rect x="471.12" y="216" width="1.100" height="5" fill="#9a9a9a"/><rect x="476.20" y="216" width="1.100" height="5" fill="#9a9a9a"/><rect x="481.29" y="216" width="1.100" height="5" fill="#9a9a9a"/><rect x="486.38" y="216" width="1.100" height="5" fill="#9a9a9a"/><rect x="491.46" y="216" width="1.100" height="5" fill="#9a9a9a"/><rect x="496.54" y="216" width="1.100" height="5" fill="#9a9a9a"/><rect x="501.63" y="216" width="1.100" height="5" fill="#9a9a9a"/><rect x="506.71" y="216" width="1.100" height="5" fill="#9a9a9a"/><rect x="511.80" y="211" width="1.200" height="10" fill="#ababab"/><rect x="516.88" y="216" width="1.100" height="5" fill="#9a9a9a"/><rect x="521.97" y="216" width="1.100" height="5" fill="#9a9a9a"/><rect x="527.05" y="216" width="1.100" height="5" fill="#9a9a9a"/><rect x="532.14" y="216" width="1.100" height="5" fill="#9a9a9a"/><rect x="537.23" y="216" width="1.100" height="5" fill="#9a9a9a"/><rect x="542.31" y="216" width="1.100" height="5" fill="#9a9a9a"/><rect x="547.39" y="216" width="1.100" height="5" fill="#9a9a9a"/><rect x="552.48" y="216" width="1.100" height="5" fill="#9a9a9a"/><rect x="557.56" y="216" width="1.100" height="5" fill="#9a9a9a"/><rect x="562.65" y="216" width="1.100" height="5" fill="#9a9a9a"/><rect x="567.74" y="216" width="1.100" height="5" fill="#9a9a9a"/><rect x="572.82" y="211" width="1.200" height="10" fill="#ababab"/><rect x="577.90" y="216" width="1.100" height="5" fill="#9a9a9a"/><rect x="582.99" y="216" width="1.100" height="5" fill="#9a9a9a"/><rect x="588.07" y="216" width="1.100" height="5" fill="#9a9a9a"/><rect x="593.16" y="216" width="1.100" height="5" fill="#9a9a9a"/><rect x="598.25" y="216" width="1.100" height="5" fill="#9a9a9a"/><rect x="603.33" y="216" width="1.100" height="5" fill="#9a9a9a"/><rect x="608.41" y="216" width="1.100" height="5" fill="#9a9a9a"/><rect x="613.50" y="216" width="1.100" height="5" fill="#9a9a9a"/><rect x="618.58" y="216" width="1.100" height="5" fill="#9a9a9a"/><rect x="623.67" y="216" width="1.100" height="5" fill="#9a9a9a"/><rect x="628.75" y="216" width="1.100" height="5" fill="#9a9a9a"/><rect x="633.84" y="211" width="1.200" height="10" fill="#ababab"/><rect x="638.93" y="216" width="1.100" height="5" fill="#9a9a9a"/><rect x="644.01" y="216" width="1.100" height="5" fill="#9a9a9a"/><rect x="649.09" y="216" width="1.100" height="5" fill="#9a9a9a"/><rect x="654.18" y="216" width="1.100" height="5" fill="#9a9a9a"/><rect x="659.26" y="216" width="1.100" height="5" fill="#9a9a9a"/><rect x="664.35" y="216" width="1.100" height="5" fill="#9a9a9a"/><rect x="669.44" y="216" width="1.100" height="5" fill="#9a9a9a"/><rect x="674.52" y="216" width="1.100" height="5" fill="#9a9a9a"/><rect x="679.60" y="216" width="1.100" height="5" fill="#9a9a9a"/><rect x="684.69" y="216" width="1.100" height="5" fill="#9a9a9a"/><rect x="689.77" y="216" width="1.100" height="5" fill="#9a9a9a"/><rect x="694.86" y="211" width="1.200" height="10" fill="#ababab"/><rect x="699.95" y="216" width="1.100" height="5" fill="#9a9a9a"/><rect x="705.03" y="216" width="1.100" height="5" fill="#9a9a9a"/><rect x="710.12" y="216" width="1.100" height="5" fill="#9a9a9a"/><rect x="715.20" y="216" width="1.100" height="5" fill="#9a9a9a"/><rect x="720.28" y="216" width="1.100" height="5" fill="#9a9a9a"/><rect x="725.37" y="216" width="1.100" height="5" fill="#9a9a9a"/><rect x="730.46" y="216" width="1.100" height="5" fill="#9a9a9a"/><rect x="735.54" y="216" width="1.100" height="5" fill="#9a9a9a"/><rect x="740.62" y="216" width="1.100" height="5" fill="#9a9a9a"/><rect x="745.71" y="216" width="1.100" height="5" fill="#9a9a9a"/><rect x="750.79" y="216" width="1.100" height="5" fill="#9a9a9a"/><rect x="755.88" y="211" width="1.200" height="10" fill="#ababab"/><rect x="760.97" y="216" width="1.100" height="5" fill="#9a9a9a"/><rect x="766.05" y="216" width="1.100" height="5" fill="#9a9a9a"/><rect x="771.13" y="216" width="1.100" height="5" fill="#9a9a9a"/><rect x="776.22" y="216" width="1.100" height="5" fill="#9a9a9a"/><rect x="781.30" y="216" width="1.100" height="5" fill="#9a9a9a"/><rect x="786.39" y="216" width="1.100" height="5" fill="#9a9a9a"/><rect x="791.48" y="216" width="1.100" height="5" fill="#9a9a9a"/><rect x="796.56" y="216" width="1.100" height="5" fill="#9a9a9a"/><rect x="801.65" y="216" width="1.100" height="5" fill="#9a9a9a"/><rect x="806.73" y="216" width="1.100" height="5" fill="#9a9a9a"/><rect x="811.81" y="216" width="1.100" height="5" fill="#9a9a9a"/><rect x="816.90" y="211" width="1.200" height="10" fill="#ababab"/><rect x="821.99" y="216" width="1.100" height="5" fill="#9a9a9a"/><rect x="827.07" y="216" width="1.100" height="5" fill="#9a9a9a"/><rect x="832.16" y="216" width="1.100" height="5" fill="#9a9a9a"/><rect x="837.24" y="216" width="1.100" height="5" fill="#9a9a9a"/><rect x="842.32" y="216" width="1.100" height="5" fill="#9a9a9a"/><rect x="847.41" y="216" width="1.100" height="5" fill="#9a9a9a"/><rect x="852.50" y="216" width="1.100" height="5" fill="#9a9a9a"/><rect x="857.58" y="216" width="1.100" height="5" fill="#9a9a9a"/><rect x="862.67" y="216" width="1.100" height="5" fill="#9a9a9a"/><rect x="867.75" y="216" width="1.100" height="5" fill="#9a9a9a"/><rect x="872.83" y="216" width="1.100" height="5" fill="#9a9a9a"/><rect x="877.92" y="211" width="1.200" height="10" fill="#ababab"/><rect x="883.00" y="216" width="1.100" height="5" fill="#9a9a9a"/><rect x="888.09" y="216" width="1.100" height="5" fill="#9a9a9a"/><rect x="893.18" y="216" width="1.100" height="5" fill="#9a9a9a"/><rect x="898.26" y="216" width="1.100" height="5" fill="#9a9a9a"/><rect x="903.34" y="216" width="1.100" height="5" fill="#9a9a9a"/><rect x="908.43" y="216" width="1.100" height="5" fill="#9a9a9a"/><rect x="913.51" y="216" width="1.100" height="5" fill="#9a9a9a"/><rect x="918.60" y="216" width="1.100" height="5" fill="#9a9a9a"/><rect x="923.69" y="216" width="1.100" height="5" fill="#9a9a9a"/><rect x="928.77" y="216" width="1.100" height="5" fill="#9a9a9a"/><rect x="933.85" y="216" width="1.100" height="5" fill="#9a9a9a"/><rect x="938.94" y="211" width="1.200" height="10" fill="#ababab"/><rect x="944.02" y="216" width="1.100" height="5" fill="#9a9a9a"/><rect x="949.11" y="216" width="1.100" height="5" fill="#9a9a9a"/><rect x="954.20" y="216" width="1.100" height="5" fill="#9a9a9a"/><rect x="959.28" y="216" width="1.100" height="5" fill="#9a9a9a"/><rect x="964.36" y="216" width="1.100" height="5" fill="#9a9a9a"/><rect x="969.45" y="216" width="1.100" height="5" fill="#9a9a9a"/><rect x="974.53" y="216" width="1.100" height="5" fill="#9a9a9a"/><rect x="979.62" y="216" width="1.100" height="5" fill="#9a9a9a"/><rect x="984.71" y="216" width="1.100" height="5" fill="#9a9a9a"/><rect x="989.79" y="216" width="1.100" height="5" fill="#9a9a9a"/><rect x="994.87" y="216" width="1.100" height="5" fill="#9a9a9a"/><rect x="999.96" y="211" width="1.200" height="10" fill="#ababab"/><rect x="1005.04" y="216" width="1.100" height="5" fill="#9a9a9a"/><rect x="1010.13" y="216" width="1.100" height="5" fill="#9a9a9a"/></svg>
<svg style="left:644px;top:207px;" width="15" height="14" viewBox="0 0 15 14"><path d="M0.500 1h9.900v7.300L5.500 11.800 0.500 8.300z" fill="#3d93ee"/><path d="M7.300 9.300l6.700.500-3.500 3.200-3.700-1.500z" fill="#3d93ee"/></svg>
<div style="left:207px;top:233px;width:804px;height:11px;background:#4b4b4b;border-radius:5.5px;"></div>
<svg style="left:207px;top:233px;" width="11" height="11" viewBox="0 0 11 11"><circle cx="5.5" cy="5.5" r="4.1" fill="#0c0c0c" stroke="#dcdcdc" stroke-width="1.7"/></svg>
<svg style="left:1000.2px;top:233px;" width="11" height="11" viewBox="0 0 11 11"><circle cx="5.5" cy="5.5" r="4.1" fill="#0c0c0c" stroke="#dcdcdc" stroke-width="1.7"/></svg>
<svg style="left:0px;top:0px;" width="1024" height="281" viewBox="0 0 1024 281"><path d="M422 254.200h7.200l1.100 1.100v4h-8.300z" fill="#9c9c9c"/><path d="M419.600 256.300h7.700v10.600h-7.700z" fill="#b4b4b4" stroke="#1d1d1d" stroke-width="0.500"/><circle cx="428" cy="262.300" r="3" fill="#1d1d1d" stroke="#b4b4b4" stroke-width="1.400"/><path d="M430.300 264.600l2.600 2.600" stroke="#b4b4b4" stroke-width="1.600"/><path d="M449.500 256h8.800v5.300l-4.400 3.900-4.400-3.900z" fill="#b4b4b4"/><path d="M485.70 254.900h-.900q-1.100 0-1.100 1.100v2.400q0 1.400-1.300 1.600q1.300.200 1.300 1.600v2.400q0 1.100 1.100 1.100h.900" fill="none" stroke="#b4b4b4" stroke-width="1.85"/><path d="M507.20 254.900h.900q1.100 0 1.100 1.100v2.400q0 1.400 1.300 1.600q-1.300.200-1.300 1.600v2.400q0 1.100-1.100 1.100h-.900" fill="none" stroke="#b4b4b4" stroke-width="1.85"/><path d="M550.40 254.900h-.900q-1.100 0-1.100 1.100v2.400q0 1.400-1.300 1.600q1.300.200 1.300 1.600v2.400q0 1.100 1.100 1.100h.900" fill="none" stroke="#b4b4b4" stroke-width="1.85"/><path d="M550.900 260.100l4.300-3.500v2.400h5v2.300h-5v2.400z" fill="#b4b4b4"/><path d="M576.900 260.250l6.900-3.700v7.400z" fill="#b4b4b4"/><path d="M584.900 256.600h2.300v7.300h-2.300z" fill="#b4b4b4"/><path d="M605 255.500l8.700 4.600-8.700 4.600z" fill="#b4b4b4"/><path d="M632.200 256.600h2.300v7.300h-2.300z" fill="#b4b4b4"/><path d="M636 256.550l6.900 3.700-6.900 3.700z" fill="#b4b4b4"/><path d="M668.400 260.100l-4.300-3.500v2.400h-4.500v2.300h4.500v2.400z" fill="#b4b4b4"/><path d="M668.70 254.900h.900q1.100 0 1.100 1.100v2.400q0 1.400 1.300 1.600q-1.300.200-1.300 1.600v2.400q0 1.100-1.100 1.100h-.900" fill="none" stroke="#b4b4b4" stroke-width="1.85"/><path d="M699.1 258.900h5.600v6.100h-5.600zM710.5 258.900h5.900v6.100h-5.900z" fill="#b4b4b4"/><rect x="704.0" y="254.300" width="8" height="5.500" fill="#2c2c2c" stroke="#b4b4b4" stroke-width="1.100"/><path d="M706.3000000000001 258.300l1.700-2.500 1.700 2.500z" fill="#e0e0e0"/><path d="M727.7 258.900h5.600v6.100h-5.600zM739.1 258.900h5.900v6.100h-5.900z" fill="#b4b4b4"/><rect x="732.6" y="254.300" width="8" height="5.500" fill="#2c2c2c" stroke="#b4b4b4" stroke-width="1.100"/><path d="M734.9000000000001 258.300l1.700-2.500 1.700 2.500z" fill="#e0e0e0"/><path d="M729 260.300l2.500 1.700-2.500 1.700zM743.800 260.300l-2.500 1.700 2.500 1.700z" fill="#1d1d1d"/><path d="M758.500 257h3l1-1.800h4.800l1 1.800h3v8.200h-12.800z" fill="#b4b4b4"/><circle cx="764.900" cy="260.900" r="2.500" fill="#1d1d1d"/><circle cx="764.900" cy="260.900" r="1.300" fill="#b4b4b4"/><path d="M783.700 253h10.300v8.800h-10.300z" fill="#b4b4b4"/><path d="M785.600 254.600h6.500v5.600h-6.500z" fill="#8a8a8a"/><path d="M784.600 254v7" stroke="#1d1d1d" stroke-width="0.700" stroke-dasharray="0.900 0.900"/><path d="M793.100 254v7" stroke="#1d1d1d" stroke-width="0.700" stroke-dasharray="0.900 0.900"/><path d="M791 258.900h10v7.600h-10z" fill="#b4b4b4" stroke="#1d1d1d" stroke-width="0.900"/><path d="M793.300 260.600h5.500v4.300h-5.500z" fill="#2a2a2a"/><path d="M792.200 260v5.500" stroke="#1d1d1d" stroke-width="0.700" stroke-dasharray="0.900 0.900"/><path d="M799.900 260v5.500" stroke="#1d1d1d" stroke-width="0.700" stroke-dasharray="0.900 0.900"/><circle cx="821" cy="260.400" r="4.700" fill="none" stroke="#b4b4b4" stroke-width="1.700" stroke-dasharray="2.300 1.500"/><path d="M816 255l10.500 10.800" stroke="#1d1d1d" stroke-width="4"/><path d="M816 255l10.500 10.800" stroke="#b4b4b4" stroke-width="2.600"/><path d="M816 255l10.500 10.800" stroke="#1d1d1d" stroke-width="0.700"/><path d="M989.600 258.900h4.100v-4.100h2.200v4.100h4.100v2.200h-4.100v4.100h-2.200v-4.100h-4.100z" fill="#d2d2d2"/></svg>
<div style="left:0px;top:290px;width:8px;height:9px;background:#474b00;"></div>
<span id="t18" class="t" style="left:17.5px;top:288.70px;font-size:10px;line-height:14px;color:#e2e2e2;font-weight:400;letter-spacing:-0.162px;">AnimationROTATION_006</span>
<svg style="left:139.5px;top:291px;" width="9" height="10" viewBox="0 0 9 10"><path d="M0.5 1.500h7.500M0.500 4.500h7.500M0.500 7.500h7.500" stroke="#9a9a9a" stroke-width="1.200"/></svg>
<span id="t19" class="t" style="left:-7px;top:311.90px;font-size:11.8px;line-height:15.8px;color:#3f94ea;font-weight:700;letter-spacing:0.202px;">00:00:03:15</span>
<div style="left:-14px;top:331px;width:22px;height:21px;background:#474747;border-radius:3.5px;"></div>
<svg style="left:-2px;top:335px;" width="10" height="13" viewBox="0 0 10 13"><path d="M0 3.500h5.500M0 6.500h4M0 9.500h5.500" stroke="#e0e0e0" stroke-width="1.500"/></svg>
<div style="left:15.5px;top:331px;width:21.5px;height:21px;background:#474747;border-radius:3.5px;"></div>
<svg style="left:20px;top:335.5px;" width="13" height="13" viewBox="0 0 13 13"><path d="M2.700 10.700V5.800a3.500 3.500 0 0 1 7 0V10.700" fill="none" stroke="#f0f0f0" stroke-width="2.100"/><path d="M1.650 8.900h2.100v1.900h-2.100zM8.650 8.900h2.100v1.900h-2.100z" fill="#9a9a9a"/></svg>
<div style="left:43.7px;top:331px;width:21.3px;height:21px;background:#474747;border-radius:3.5px;"></div>
<svg style="left:47px;top:334.5px;" width="15" height="13.5" viewBox="0 0 15 13.5"><path d="M0.700 1h12.600v4.300H0.700z" fill="#d8d8d8"/><path d="M0.700 6.500h4.500v5.300H0.700z" fill="none" stroke="#d8d8d8" stroke-width="1"/><path d="M5.200 1.200v11.600l3-2.900h4.700z" fill="#f2f2f2" stroke="#474747" stroke-width="1"/></svg>
<svg style="left:78px;top:337px;" width="9" height="10" viewBox="0 0 9 10"><path d="M0.600 0.700h7.400v4.800L4.300 9 0.600 5.500z" fill="#b4b4b4"/></svg>
<svg style="left:104.5px;top:335.2px;" width="13" height="13" viewBox="0 0 14 14"><g transform="rotate(-45 7 7)"><circle cx="7" cy="2.9" r="3.5" fill="#c0c0c0"/><rect x="5.500" y="4" width="3" height="11.300" rx="1.400" fill="#c0c0c0"/><rect x="5.700" y="-1.500" width="2.600" height="4.300" fill="#1d1d1d"/></g></svg>
<div style="left:132px;top:337px;width:14.5px;height:9.5px;background:#8c8c8c;border-radius:2px;"></div>
<span id="t20" class="t" style="left:133.6px;top:336.80px;font-size:8.5px;line-height:10px;color:#1d1d1d;font-weight:700;letter-spacing:-0.391px;">CC</span>
<div style="left:0px;top:357.8px;width:156px;height:1px;background:#323232;"></div>
<div style="left:0px;top:391.3px;width:1024px;height:1px;background:#323232;"></div>
<div style="left:0px;top:435.7px;width:1024px;height:4.5px;background:#2f2f2f;"></div>
<div style="left:0px;top:471.3px;width:1024px;height:1px;background:#323232;"></div>
<div style="left:0px;top:503px;width:1024px;height:1px;background:#323232;"></div>
<div style="left:0px;top:534.8px;width:1024px;height:1px;background:#323232;"></div>
<div style="left:0px;top:566.3px;width:1024px;height:1px;background:#323232;"></div>
<div style="left:155.8px;top:345px;width:1.2px;height:244px;background:#383838;"></div>
<svg style="left:0px;top:0px;" width="1024" height="360" viewBox="0 0 1024 360"><rect x="156.05" y="347" width="1.300" height="10.500" fill="#8c8c8c"/><rect x="163.56" y="352.300" width="1.100" height="5" fill="#808080"/><rect x="171.08" y="352.300" width="1.100" height="5" fill="#808080"/><rect x="178.59" y="352.300" width="1.100" height="5" fill="#808080"/><rect x="186.10" y="352.300" width="1.100" height="5" fill="#808080"/><rect x="193.61" y="352.300" width="1.100" height="5" fill="#808080"/><rect x="201.12" y="352.300" width="1.100" height="5" fill="#808080"/><rect x="208.64" y="352.300" width="1.100" height="5" fill="#808080"/><rect x="216.15" y="352.300" width="1.100" height="5" fill="#808080"/><rect x="223.66" y="352.300" width="1.100" height="5" fill="#808080"/><rect x="231.18" y="352.300" width="1.100" height="5" fill="#808080"/><rect x="238.69" y="352.300" width="1.100" height="5" fill="#808080"/><rect x="246.20" y="347" width="1.300" height="10.500" fill="#8c8c8c"/><rect x="253.71" y="352.300" width="1.100" height="5" fill="#808080"/><rect x="261.23" y="352.300" width="1.100" height="5" fill="#808080"/><rect x="268.74" y="352.300" width="1.100" height="5" fill="#808080"/><rect x="276.25" y="352.300" width="1.100" height="5" fill="#808080"/><rect x="283.76" y="352.300" width="1.100" height="5" fill="#808080"/><rect x="291.27" y="352.300" width="1.100" height="5" fill="#808080"/><rect x="298.79" y="352.300" width="1.100" height="5" fill="#808080"/><rect x="306.30" y="352.300" width="1.100" height="5" fill="#808080"/><rect x="313.81" y="352.300" width="1.100" height="5" fill="#808080"/><rect x="321.33" y="352.300" width="1.100" height="5" fill="#808080"/><rect x="328.84" y="352.300" width="1.100" height="5" fill="#808080"/><rect x="336.35" y="347" width="1.300" height="10.500" fill="#8c8c8c"/><rect x="343.86" y="352.300" width="1.100" height="5" fill="#808080"/><rect x="351.38" y="352.300" width="1.100" height="5" fill="#808080"/><rect x="358.89" y="352.300" width="1.100" height="5" fill="#808080"/><rect x="366.40" y="352.300" width="1.100" height="5" fill="#808080"/><rect x="373.91" y="352.300" width="1.100" height="5" fill="#808080"/><rect x="381.43" y="352.300" width="1.100" height="5" fill="#808080"/><rect x="388.94" y="352.300" width="1.100" height="5" fill="#808080"/><rect x="396.45" y="352.300" width="1.100" height="5" fill="#808080"/><rect x="403.96" y="352.300" width="1.100" height="5" fill="#808080"/><rect x="411.48" y="352.300" width="1.100" height="5" fill="#808080"/><rect x="418.99" y="352.300" width="1.100" height="5" fill="#808080"/><rect x="426.50" y="347" width="1.300" height="10.500" fill="#8c8c8c"/><rect x="434.01" y="352.300" width="1.100" height="5" fill="#808080"/><rect x="441.53" y="352.300" width="1.100" height="5" fill="#808080"/><rect x="449.04" y="352.300" width="1.100" height="5" fill="#808080"/><rect x="456.55" y="352.300" width="1.100" height="5" fill="#808080"/><rect x="464.06" y="352.300" width="1.100" height="5" fill="#808080"/><rect x="471.58" y="352.300" width="1.100" height="5" fill="#808080"/><rect x="479.09" y="352.300" width="1.100" height="5" fill="#808080"/><rect x="486.60" y="352.300" width="1.100" height="5" fill="#808080"/><rect x="494.11" y="352.300" width="1.100" height="5" fill="#808080"/><rect x="501.62" y="352.300" width="1.100" height="5" fill="#808080"/><rect x="509.14" y="352.300" width="1.100" height="5" fill="#808080"/><rect x="516.65" y="347" width="1.300" height="10.500" fill="#8c8c8c"/><rect x="524.16" y="352.300" width="1.100" height="5" fill="#808080"/><rect x="531.67" y="352.300" width="1.100" height="5" fill="#808080"/><rect x="539.19" y="352.300" width="1.100" height="5" fill="#808080"/><rect x="546.70" y="352.300" width="1.100" height="5" fill="#808080"/><rect x="554.21" y="352.300" width="1.100" height="5" fill="#808080"/><rect x="561.73" y="352.300" width="1.100" height="5" fill="#808080"/><rect x="569.24" y="352.300" width="1.100" height="5" fill="#808080"/><rect x="576.75" y="352.300" width="1.100" height="5" fill="#808080"/><rect x="584.26" y="352.300" width="1.100" height="5" fill="#808080"/><rect x="591.78" y="352.300" width="1.100" height="5" fill="#808080"/><rect x="599.29" y="352.300" width="1.100" height="5" fill="#808080"/><rect x="606.80" y="347" width="1.300" height="10.500" fill="#8c8c8c"/><rect x="614.31" y="352.300" width="1.100" height="5" fill="#808080"/><rect x="621.83" y="352.300" width="1.100" height="5" fill="#808080"/><rect x="629.34" y="352.300" width="1.100" height="5" fill="#808080"/><rect x="636.85" y="352.300" width="1.100" height="5" fill="#808080"/><rect x="644.36" y="352.300" width="1.100" height="5" fill="#808080"/><rect x="651.88" y="352.300" width="1.100" height="5" fill="#808080"/><rect x="659.39" y="352.300" width="1.100" height="5" fill="#808080"/><rect x="666.90" y="352.300" width="1.100" height="5" fill="#808080"/><rect x="674.41" y="352.300" width="1.100" height="5" fill="#808080"/><rect x="681.92" y="352.300" width="1.100" height="5" fill="#808080"/><rect x="689.44" y="352.300" width="1.100" height="5" fill="#808080"/><rect x="696.95" y="347" width="1.300" height="10.500" fill="#8c8c8c"/><rect x="704.46" y="352.300" width="1.100" height="5" fill="#808080"/><rect x="711.98" y="352.300" width="1.100" height="5" fill="#808080"/><rect x="719.49" y="352.300" width="1.100" height="5" fill="#808080"/><rect x="727.00" y="352.300" width="1.100" height="5" fill="#808080"/><rect x="734.51" y="352.300" width="1.100" height="5" fill="#808080"/><rect x="742.03" y="352.300" width="1.100" height="5" fill="#808080"/><rect x="749.54" y="352.300" width="1.100" height="5" fill="#808080"/><rect x="757.05" y="352.300" width="1.100" height="5" fill="#808080"/><rect x="764.56" y="352.300" width="1.100" height="5" fill="#808080"/><rect x="772.08" y="352.300" width="1.100" height="5" fill="#808080"/><rect x="779.59" y="352.300" width="1.100" height="5" fill="#808080"/><rect x="787.10" y="347" width="1.300" height="10.500" fill="#8c8c8c"/><rect x="794.61" y="352.300" width="1.100" height="5" fill="#808080"/><rect x="802.12" y="352.300" width="1.100" height="5" fill="#808080"/><rect x="809.64" y="352.300" width="1.100" height="5" fill="#808080"/><rect x="817.15" y="352.300" width="1.100" height="5" fill="#808080"/><rect x="824.66" y="352.300" width="1.100" height="5" fill="#808080"/><rect x="832.17" y="352.300" width="1.100" height="5" fill="#808080"/><rect x="839.69" y="352.300" width="1.100" height="5" fill="#808080"/><rect x="847.20" y="352.300" width="1.100" height="5" fill="#808080"/><rect x="854.71" y="352.300" width="1.100" height="5" fill="#808080"/><rect x="862.23" y="352.300" width="1.100" height="5" fill="#808080"/><rect x="869.74" y="352.300" width="1.100" height="5" fill="#808080"/><rect x="877.25" y="347" width="1.300" height="10.500" fill="#8c8c8c"/><rect x="884.76" y="352.300" width="1.100" height="5" fill="#808080"/><rect x="892.28" y="352.300" width="1.100" height="5" fill="#808080"/><rect x="899.79" y="352.300" width="1.100" height="5" fill="#808080"/><rect x="907.30" y="352.300" width="1.100" height="5" fill="#808080"/><rect x="914.81" y="352.300" width="1.100" height="5" fill="#808080"/><rect x="922.33" y="352.300" width="1.100" height="5" fill="#808080"/><rect x="929.84" y="352.300" width="1.100" height="5" fill="#808080"/><rect x="937.35" y="352.300" width="1.100" height="5" fill="#808080"/><rect x="944.86" y="352.300" width="1.100" height="5" fill="#808080"/><rect x="952.38" y="352.300" width="1.100" height="5" fill="#808080"/><rect x="959.89" y="352.300" width="1.100" height="5" fill="#808080"/><rect x="967.40" y="347" width="1.300" height="10.500" fill="#8c8c8c"/><rect x="974.91" y="352.300" width="1.100" height="5" fill="#808080"/><rect x="982.42" y="352.300" width="1.100" height="5" fill="#808080"/><rect x="989.94" y="352.300" width="1.100" height="5" fill="#808080"/><rect x="997.45" y="352.300" width="1.100" height="5" fill="#808080"/><rect x="1004.96" y="352.300" width="1.100" height="5" fill="#808080"/><rect x="1012.48" y="352.300" width="1.100" height="5" fill="#808080"/><rect x="1019.99" y="352.300" width="1.100" height="5" fill="#808080"/></svg>
<div style="left:402.3px;top:320px;width:1.2px;height:37.3px;background:#5e5e5e;"></div>
<div class="c" style="left:157px;top:330px;width:867px;height:24px;">
<span id="t21" class="t" style="left:-23.95000000000001px;top:3.65px;font-size:9.5px;line-height:13.5px;color:#c8c8c8;font-weight:400;letter-spacing:-0.035px;">00:00:00:00</span>
<span id="t22" class="t" style="left:66.19999999999999px;top:3.65px;font-size:9.5px;line-height:13.5px;color:#c8c8c8;font-weight:400;letter-spacing:-0.035px;">00:00:01:00</span>
<span id="t23" class="t" style="left:156.35px;top:3.65px;font-size:9.5px;line-height:13.5px;color:#c8c8c8;font-weight:400;letter-spacing:-0.035px;">00:00:02:00</span>
<span id="t24" class="t" style="left:246.50000000000003px;top:3.65px;font-size:9.5px;line-height:13.5px;color:#c8c8c8;font-weight:400;letter-spacing:-0.035px;">00:00:03:00</span>
<span id="t25" class="t" style="left:336.65px;top:3.65px;font-size:9.5px;line-height:13.5px;color:#c8c8c8;font-weight:400;letter-spacing:-0.035px;">00:00:04:00</span>
<span id="t26" class="t" style="left:426.80000000000007px;top:3.65px;font-size:9.5px;line-height:13.5px;color:#c8c8c8;font-weight:400;letter-spacing:-0.035px;">00:00:05:00</span>
<span id="t27" class="t" style="left:516.9500000000002px;top:3.65px;font-size:9.5px;line-height:13.5px;color:#c8c8c8;font-weight:400;letter-spacing:-0.035px;">00:00:06:00</span>
<span id="t28" class="t" style="left:607.1px;top:3.65px;font-size:9.5px;line-height:13.5px;color:#c8c8c8;font-weight:400;letter-spacing:-0.035px;">00:00:07:00</span>
<span id="t29" class="t" style="left:697.2500000000001px;top:3.65px;font-size:9.5px;line-height:13.5px;color:#c8c8c8;font-weight:400;letter-spacing:-0.035px;">00:00:08:00</span>
<span id="t30" class="t" style="left:787.4px;top:3.65px;font-size:9.5px;line-height:13.5px;color:#c8c8c8;font-weight:400;letter-spacing:-0.035px;">00:00:09:00</span>
</div>
<div style="left:156.7px;top:359px;width:588px;height:32px;background:#15323f;border-radius:0 0 1.5px 1.5px;"></div>
<div style="left:156.75px;top:359px;width:6.35px;height:32.4px;background:#034e6c;border-radius:0 0 1.5px 1.5px;"></div>
<div style="left:164.25px;top:359px;width:6.35px;height:32.4px;background:#034e6c;border-radius:0 0 1.5px 1.5px;"></div>
<div style="left:171.75px;top:359px;width:6.35px;height:32.4px;background:#034e6c;border-radius:0 0 1.5px 1.5px;"></div>
<div style="left:179.25px;top:359px;width:6.35px;height:32.4px;background:#034e6c;border-radius:0 0 1.5px 1.5px;"></div>
<div style="left:186.75px;top:359px;width:6.35px;height:32.4px;background:#034e6c;border-radius:0 0 1.5px 1.5px;"></div>
<div style="left:194.25px;top:359px;width:6.35px;height:32.4px;background:#034e6c;border-radius:0 0 1.5px 1.5px;"></div>
<div style="left:201.75px;top:359px;width:6.35px;height:32.4px;background:#034e6c;border-radius:0 0 1.5px 1.5px;"></div>
<div style="left:209.25px;top:359px;width:6.35px;height:32.4px;background:#034e6c;border-radius:0 0 1.5px 1.5px;"></div>
<div style="left:216.75px;top:359px;width:23.85px;height:32.4px;background:#034e6c;border-radius:0 0 1.5px 1.5px;"></div>
<div style="left:241.75px;top:359px;width:2.73px;height:32.4px;background:#034e6c;border-radius:0 0 1.5px 1.5px;"></div>
<div style="left:245.63px;top:359px;width:2.73px;height:32.4px;background:#034e6c;border-radius:0 0 1.5px 1.5px;"></div>
<div style="left:249.51px;top:359px;width:2.73px;height:32.4px;background:#034e6c;border-radius:0 0 1.5px 1.5px;"></div>
<div style="left:253.39px;top:359px;width:2.73px;height:32.4px;background:#034e6c;border-radius:0 0 1.5px 1.5px;"></div>
<div style="left:257.27px;top:359px;width:2.73px;height:32.4px;background:#034e6c;border-radius:0 0 1.5px 1.5px;"></div>
<div style="left:261.15px;top:359px;width:2.73px;height:32.4px;background:#034e6c;border-radius:0 0 1.5px 1.5px;"></div>
<div style="left:265.03px;top:359px;width:2.73px;height:32.4px;background:#034e6c;border-radius:0 0 1.5px 1.5px;"></div>
<div style="left:268.91px;top:359px;width:2.73px;height:32.4px;background:#034e6c;border-radius:0 0 1.5px 1.5px;"></div>
<div style="left:272.79px;top:359px;width:2.73px;height:32.4px;background:#034e6c;border-radius:0 0 1.5px 1.5px;"></div>
<div style="left:276.67px;top:359px;width:46.53px;height:32.4px;background:#034e6c;border-radius:0 0 1.5px 1.5px;"></div>
<div style="left:324.35px;top:359px;width:2.85px;height:32.4px;background:#034e6c;border-radius:0 0 1.5px 1.5px;"></div>
<div style="left:328.35px;top:359px;width:2.75px;height:32.4px;background:#034e6c;border-radius:0 0 1.5px 1.5px;"></div>
<div style="left:332.25px;top:359px;width:2.65px;height:32.4px;background:#034e6c;border-radius:0 0 1.5px 1.5px;"></div>
<div style="left:336.05px;top:359px;width:2.75px;height:32.4px;background:#034e6c;border-radius:0 0 1.5px 1.5px;"></div>
<div style="left:339.95px;top:359px;width:142.85px;height:32.4px;background:#034e6c;border-radius:0 0 1.5px 1.5px;"></div>
<div style="left:483.95px;top:359px;width:15.85px;height:32.4px;background:#034e6c;border-radius:0 0 1.5px 1.5px;"></div>
<div style="left:500.95px;top:359px;width:243.85px;height:32.4px;background:#034e6c;border-radius:0 0 1.5px 1.5px;"></div>
<div style="left:156.7px;top:369.7px;width:587px;height:0.7px;background:#04445f;"></div>
<div style="left:156.7px;top:357.5px;width:588.6px;height:1.7px;background:#e6e600;"></div>
<svg style="left:216.9px;top:370.6px;background:#fff;" width="24.2" height="20.5" viewBox="37.4 0 165.3 140"><rect width="248" height="140" fill="#fff"/>
<path d="M102 81.500c-1.500 4-2.500 8.500-2.500 12.700c-.800 7-1.300 13.500-1.300 20.400c.500 9 1.700 17 3.200 25.400h36.300c-.700-4.200-1.300-8.300-1.300-12.500c1.200-6.500 1.900-13 1.900-19.300c0-9-.500-18-1.300-26.700h-4.400c-3.500 4-8.200 7.300-13.400 9.500c-4.300-2.300-8.400-5.500-11.500-9.500z" fill="#b4b4b4"/>
<path d="M98.200 95.500c.800-1.500 2-2.200 3.500-2.300c2.300-.800 4.700-.800 6.500.200c1.200 1.500 1.700 3.500 1.800 5.500c.500 2.500.800 5 .600 7.500c-.500 1.300-1.500 2.200-2.800 2.500l-3.500 3l-3 4.500l-2.500 4.800l-2-9z" fill="#fff"/>
<path d="M117.300 104.500c1-.500 2.200 0 3 1.200c.800 1.500 1.200 3 1.500 4.500l4.400 1.800c3.500 1.500 7 3 10.800 4l1.800 2l-2.400 9.300c-4-2-8.500-4.200-12.700-6.300l-.900 2c-2 .500-4 .500-6 .200c-1.300.300-2.700 0-3.500-1c-.800-2-1.300-4-1.500-6c-.500-1.200-1-2.500-1.200-3.800c.300-1.200 1.200-2 2.500-2.500c1.200-.800 2.500-2 3.400-3.400z" fill="#fff"/>
<g fill="none" stroke="#5c5c5c" stroke-width="1.700" stroke-linecap="round" stroke-linejoin="round">
<!-- ahoge -->
<path d="M122.400 20.800c5-5.500 11.500-12.500 19-18.600c-3.500 6.500-9.500 12.500-17 17.800"/>
<!-- hair left outer -->
<path d="M122.400 21c-3.500-4.500-8-5.500-11.400-5c-5 .800-9.500 3.500-12.800 6.300c-5 3.800-9.200 7.800-12.700 12.100c-3.200 3.500-6 6.300-7.700 8.900c-2 3.500-2.700 7-2.500 10.200c.200 4 1.500 7.400 3.700 10.200c2 2.500 5 4.500 8.400 5.700"/>
<path d="M98.200 22.300c4-3 8-5 12.800-6"/>
<!-- hair right outer, long -->
<path d="M123.700 21c2.500-.800 5.500-.800 7.600 0c3 1.500 5.500 4.500 7.700 8.300c2.500 4.500 4.500 9.300 6.300 14c1.800 5.200 3.700 10.300 6.400 15.300c3 5.500 7 10 10.200 11.400c4 4.500 7.200 10.300 8.900 16.500c1.800 6 3.300 12.500 3.200 19.100c-.300 6.500-2 12.700-4.500 17.900c-3 5-7.500 8.800-12.700 11.500c-5.500 2.500-11.500 4-17.800 4.400"/>
<!-- fringe -->
<path d="M119.200 25.500c-3 4.500-5.200 10.500-5.700 16.500c-.200 4.500.700 8.800 2.500 12.700c1.500 3.500 3.800 6.500 6.400 9"/>
<path d="M119.800 25c-1.500 6-2.300 11.500-1.800 17.500c.500 5 2 10 4.200 14.500"/>
<path d="M119.500 33l1.200 3.500M121.500 40.500c3 .5 6 1.700 8.500 3.500"/>
<!-- brow arcs -->
<path d="M99.500 45c2.500-2.500 6-4.500 10.500-5.300M98.200 49.500c3-2.300 7-3.500 11.500-3.400"/>
<!-- face -->
<path d="M98.200 54.700c.500 4 1.800 7.500 3.800 10.300c2.500 3.500 5.500 6.300 9 8.200c2.500 1.200 5.500 1.500 8.500.800c3-1 5.500-3.300 7.500-6c2.500-3.500 4.500-7.500 5.800-11.500"/>
<!-- eyes -->
<path d="M96.500 52.300c2-1.800 4.500-3 7-3.300h7.500" stroke-width="1"/>
<path d="M102.800 49.500c-.700 1.700-.300 3.500 1 4.500h5c1.500-1 2.200-2.800 2-4.700" fill="#d0d0d0"/>
<path d="M119.500 50.500c2-1.300 4.500-2 7-2c2.500.2 4.800 1 6.500 2.700" stroke-width="0.900"/>
<path d="M121.700 50c-.500 1.800 0 3.500 1.300 4.500h5c1.500-.800 2.200-2.500 2-4.300"/>
<path d="M115 59l1.500.2"/>
<!-- mouth -->
<path d="M112.200 66.800c3.500-.2 7.200-.8 10.800-2c-.800 2.500-2.800 4.300-5.500 4.700c-2.200-.2-4-1.200-5.300-2.700z"/>
<!-- ear -->
<path d="M138 52.500c-.800-3-.300-6.500 1.500-8.200c1.500-1 3 .2 3.300 2.500c.2 2.500-.800 5.500-2.800 7.300"/>
<path d="M134.500 51.500c1.500 2 2.500 4.500 2.500 7.500M133.500 52.500c1 2.500 1.300 5 .8 7.500"/>
<!-- left hair locks -->
<path d="M97 49.700c-4 2.500-7.500 6.500-9.300 11c-1 3.500-.500 7 .800 10.500c-1 3-1.800 6-1.900 9c.8 2.300 2 4.300 3.400 5.800"/>
<path d="M98.200 56c-.500 3.500-2 7-3.800 10.200c-2 3-4 5.500-5.800 8c-1 2-1.800 4-2 6"/>
<path d="M91.200 70c-.700 3.800-1 7.700-.700 11.500h10.200c4-.5 7.800-2 10.300-3.900c.8-1.500 1.300-3 1.500-4.500"/>
<!-- neck -->
<path d="M111.600 72.500c.2 2.200.600 4.500 1.200 6.500M126.200 71.300c.2 2.200.600 4.300 1.300 6.300"/>
<!-- front strand over chest (double) -->
<path d="M136.400 62c.5 4 .3 8-1 11.500c-1.300 3-3.300 5.300-5.800 7.700c-3.500 3-7 6-9.800 9.200"/>
<path d="M134.300 61c.3 4-.200 7.500-1.500 10.500c-1.300 2.800-3.500 5.200-6 7.500c-2.800 2.700-5.500 5.500-7.400 8.800"/>
<!-- top outlines -->
<path d="M107.700 81.500c3 4 7.200 7.200 11.500 9.500c5.200-2.200 9.900-5.500 13.400-9.500"/>
<path d="M102 81.500c-1.500 4-2.500 8.500-2.500 12.700M137 81.500c.8 8.700 1.300 17.700 1.300 26.700"/>
<path d="M98.400 114.600c.5 9 1.600 17 3 25.200M136.400 127.300c0 4.200.6 8.300 1.300 12.500"/>
<!-- left arm -->
<path d="M87.400 84.600c-2 3.500-3.500 7.500-4.500 11.800c-1.500 4.500-3.300 9-5.100 13.300c-1.800 4-3.200 7.800-3.800 11.300c-.800 2.500-.900 4.700-.600 6.300c1 2 2.500 3 4.400 3.200c3.300-.2 6.500-1.500 9.600-3.200c3.500-2.500 6.700-6.200 9.200-10.500l2.500-4.800"/>
<path d="M98.200 95.500c-1 3.500-2.300 7-3.800 10.100c-2.500 2.500-5.500 4.500-8.800 6.300c-3 1.700-5.700 3.500-7.800 5.100"/>
<!-- left fist -->
<path d="M98.200 95.500c.8-1.500 2-2.200 3.500-2.300c2.300-.8 4.700-.8 6.500.2c1.200 1.500 1.700 3.500 1.800 5.500c.5 2.500.8 5 .6 7.500c-.5 1.300-1.500 2.200-2.800 2.500c-1-1.500-1.700-3.500-2-5.500c-.5-2.200-1.300-4.300-2.500-6"/>
<path d="M102.500 97c1.500-.8 3.500-1 5-.5M104.500 100.500l2.500 7.500"/>
<!-- right arm -->
<path d="M137.700 81.500c3-.5 6.200 0 8.900 1.200c2.500 2.500 4 6.200 5.100 10.300c1 6 1.700 12.500 2.500 19c1 4 2.400 8 3.800 11.500c-.2 2.700-1.700 4.800-3.800 6.300c-2.300 1-4.800 1.300-7.600 1.300c-3.500-.5-7-1.900-10.200-3.800c-4-2-8.500-4.200-12.700-6.300"/>
<path d="M126.200 112c3.500 1.500 7 3 10.800 4c3 .5 6 .5 8.800.6c3 .8 6 2 8.400 3.700M138.500 112l3 4.500"/>
<!-- right fist -->
<path d="M117.300 104.500c1-.5 2.200 0 3 1.200c.8 1.500 1.200 3 1.500 4.500c.8 2.500 1.500 5 2 7.500c0 2-.3 3.800-1 5.300c-2 .5-4 .5-6 .2c-1.300.3-2.700 0-3.500-1c-.8-2-1.300-4-1.500-6c-.5-1.200-1-2.500-1.200-3.800c.3-1.200 1.200-2 2.500-2.500c1.200-.8 2.500-2 3.400-3.400c.2-.8.500-1.500.8-2z"/>
<path d="M111.500 112.500c2-.8 4-1 6-.7M112.500 116.500c1.800-.5 3.600-.6 5.300-.3M113 120.300c1.700-.4 3.500-.5 5-.2"/>
<!-- hair behind left -->
<path d="M94.400 121c-.3 4.500.2 9 1.900 12.700c1.200 1.800 2.700 3 4.400 3.800"/>
</g>
</svg>
<svg style="left:276.4px;top:370.6px;background:#fff;" width="36.8" height="20.5" viewBox="-5.7 0 251.3 140"><rect width="248" height="140" fill="#fff"/>
<path d="M102 81.500c-1.500 4-2.500 8.500-2.500 12.700c-.800 7-1.300 13.500-1.300 20.400c.500 9 1.700 17 3.200 25.400h36.300c-.700-4.200-1.300-8.300-1.300-12.500c1.200-6.500 1.900-13 1.900-19.300c0-9-.500-18-1.300-26.700h-4.400c-3.500 4-8.200 7.300-13.400 9.500c-4.300-2.300-8.400-5.500-11.500-9.500z" fill="#b4b4b4"/>
<path d="M98.200 95.500c.800-1.500 2-2.200 3.500-2.300c2.300-.800 4.700-.800 6.500.200c1.200 1.500 1.700 3.500 1.800 5.500c.500 2.500.800 5 .600 7.500c-.500 1.300-1.500 2.200-2.800 2.500l-3.500 3l-3 4.500l-2.500 4.800l-2-9z" fill="#fff"/>
<path d="M117.300 104.500c1-.500 2.200 0 3 1.200c.800 1.500 1.200 3 1.500 4.500l4.400 1.800c3.500 1.500 7 3 10.800 4l1.800 2l-2.400 9.300c-4-2-8.500-4.200-12.700-6.300l-.900 2c-2 .500-4 .500-6 .200c-1.300.300-2.700 0-3.500-1c-.800-2-1.300-4-1.500-6c-.500-1.200-1-2.500-1.200-3.800c.300-1.200 1.200-2 2.500-2.500c1.200-.800 2.500-2 3.400-3.400z" fill="#fff"/>
<g fill="none" stroke="#5c5c5c" stroke-width="1.700" stroke-linecap="round" stroke-linejoin="round">
<!-- ahoge -->
<path d="M122.400 20.800c5-5.500 11.500-12.500 19-18.600c-3.500 6.500-9.500 12.500-17 17.800"/>
<!-- hair left outer -->
<path d="M122.400 21c-3.500-4.500-8-5.500-11.400-5c-5 .800-9.500 3.500-12.800 6.300c-5 3.800-9.200 7.800-12.700 12.100c-3.200 3.500-6 6.300-7.700 8.900c-2 3.500-2.700 7-2.500 10.200c.200 4 1.500 7.400 3.700 10.200c2 2.500 5 4.500 8.400 5.700"/>
<path d="M98.200 22.300c4-3 8-5 12.800-6"/>
<!-- hair right outer, long -->
<path d="M123.700 21c2.500-.800 5.500-.800 7.600 0c3 1.500 5.500 4.500 7.700 8.300c2.500 4.500 4.500 9.300 6.300 14c1.800 5.200 3.700 10.300 6.400 15.300c3 5.500 7 10 10.200 11.400c4 4.500 7.200 10.300 8.900 16.500c1.800 6 3.300 12.500 3.200 19.100c-.300 6.500-2 12.700-4.500 17.900c-3 5-7.500 8.800-12.700 11.500c-5.500 2.500-11.500 4-17.800 4.400"/>
<!-- fringe -->
<path d="M119.200 25.500c-3 4.500-5.200 10.500-5.700 16.500c-.200 4.500.700 8.800 2.500 12.700c1.500 3.500 3.800 6.500 6.400 9"/>
<path d="M119.800 25c-1.500 6-2.300 11.500-1.800 17.500c.500 5 2 10 4.200 14.500"/>
<path d="M119.500 33l1.200 3.500M121.500 40.500c3 .5 6 1.700 8.500 3.500"/>
<!-- brow arcs -->
<path d="M99.500 45c2.500-2.500 6-4.500 10.500-5.300M98.200 49.500c3-2.300 7-3.500 11.500-3.400"/>
<!-- face -->
<path d="M98.200 54.700c.500 4 1.800 7.500 3.800 10.300c2.500 3.500 5.500 6.300 9 8.200c2.500 1.200 5.500 1.500 8.500.800c3-1 5.500-3.300 7.500-6c2.500-3.500 4.500-7.500 5.800-11.500"/>
<!-- eyes -->
<path d="M96.500 52.300c2-1.800 4.500-3 7-3.300h7.500" stroke-width="1"/>
<path d="M102.800 49.500c-.700 1.700-.300 3.500 1 4.500h5c1.500-1 2.200-2.800 2-4.700" fill="#d0d0d0"/>
<path d="M119.500 50.500c2-1.300 4.500-2 7-2c2.500.2 4.800 1 6.500 2.700" stroke-width="0.900"/>
<path d="M121.700 50c-.500 1.800 0 3.500 1.300 4.500h5c1.500-.800 2.200-2.500 2-4.300"/>
<path d="M115 59l1.500.2"/>
<!-- mouth -->
<path d="M112.200 66.800c3.500-.2 7.200-.8 10.800-2c-.800 2.500-2.800 4.300-5.500 4.700c-2.200-.2-4-1.200-5.300-2.700z"/>
<!-- ear -->
<path d="M138 52.500c-.800-3-.300-6.500 1.500-8.200c1.500-1 3 .2 3.300 2.500c.2 2.500-.800 5.500-2.800 7.300"/>
<path d="M134.500 51.500c1.500 2 2.500 4.500 2.500 7.500M133.500 52.500c1 2.500 1.300 5 .8 7.500"/>
<!-- left hair locks -->
<path d="M97 49.700c-4 2.500-7.500 6.500-9.300 11c-1 3.500-.500 7 .800 10.500c-1 3-1.800 6-1.900 9c.8 2.300 2 4.300 3.400 5.800"/>
<path d="M98.200 56c-.500 3.500-2 7-3.800 10.200c-2 3-4 5.500-5.800 8c-1 2-1.800 4-2 6"/>
<path d="M91.200 70c-.700 3.800-1 7.700-.700 11.500h10.200c4-.5 7.800-2 10.300-3.900c.8-1.500 1.300-3 1.500-4.500"/>
<!-- neck -->
<path d="M111.600 72.500c.2 2.200.600 4.500 1.200 6.500M126.200 71.300c.2 2.200.600 4.300 1.300 6.300"/>
<!-- front strand over chest (double) -->
<path d="M136.400 62c.5 4 .3 8-1 11.500c-1.300 3-3.300 5.300-5.800 7.700c-3.500 3-7 6-9.800 9.200"/>
<path d="M134.300 61c.3 4-.200 7.500-1.500 10.500c-1.300 2.800-3.500 5.200-6 7.500c-2.800 2.700-5.500 5.500-7.400 8.800"/>
<!-- top outlines -->
<path d="M107.700 81.500c3 4 7.200 7.200 11.500 9.500c5.200-2.200 9.900-5.500 13.400-9.500"/>
<path d="M102 81.500c-1.500 4-2.500 8.500-2.500 12.700M137 81.500c.8 8.700 1.300 17.700 1.300 26.700"/>
<path d="M98.400 114.600c.5 9 1.600 17 3 25.200M136.400 127.300c0 4.200.6 8.300 1.300 12.500"/>
<!-- left arm -->
<path d="M87.400 84.600c-2 3.500-3.500 7.500-4.500 11.800c-1.500 4.500-3.300 9-5.100 13.300c-1.800 4-3.200 7.800-3.800 11.300c-.800 2.500-.900 4.700-.600 6.300c1 2 2.500 3 4.400 3.200c3.300-.2 6.500-1.500 9.600-3.200c3.500-2.500 6.700-6.200 9.200-10.500l2.500-4.800"/>
<path d="M98.200 95.500c-1 3.500-2.300 7-3.800 10.100c-2.500 2.500-5.500 4.500-8.800 6.300c-3 1.700-5.700 3.500-7.800 5.100"/>
<!-- left fist -->
<path d="M98.200 95.500c.8-1.500 2-2.200 3.500-2.300c2.300-.8 4.700-.8 6.500.2c1.200 1.500 1.700 3.500 1.800 5.500c.5 2.500.8 5 .6 7.500c-.5 1.300-1.500 2.200-2.800 2.500c-1-1.500-1.700-3.500-2-5.500c-.5-2.200-1.300-4.300-2.500-6"/>
<path d="M102.500 97c1.500-.8 3.500-1 5-.5M104.500 100.500l2.500 7.500"/>
<!-- right arm -->
<path d="M137.700 81.500c3-.5 6.200 0 8.900 1.200c2.500 2.500 4 6.200 5.100 10.300c1 6 1.700 12.500 2.500 19c1 4 2.400 8 3.800 11.500c-.2 2.700-1.700 4.800-3.800 6.300c-2.300 1-4.800 1.300-7.600 1.300c-3.500-.5-7-1.900-10.200-3.800c-4-2-8.500-4.200-12.700-6.300"/>
<path d="M126.200 112c3.500 1.500 7 3 10.800 4c3 .5 6 .5 8.800.6c3 .8 6 2 8.400 3.700M138.500 112l3 4.500"/>
<!-- right fist -->
<path d="M117.300 104.500c1-.5 2.200 0 3 1.200c.8 1.500 1.200 3 1.500 4.500c.8 2.500 1.500 5 2 7.500c0 2-.3 3.800-1 5.300c-2 .5-4 .5-6 .2c-1.300.3-2.700 0-3.500-1c-.8-2-1.300-4-1.500-6c-.5-1.200-1-2.500-1.200-3.800c.3-1.200 1.200-2 2.500-2.500c1.200-.8 2.500-2 3.400-3.400c.2-.8.500-1.500.8-2z"/>
<path d="M111.500 112.500c2-.8 4-1 6-.7M112.500 116.500c1.800-.5 3.600-.6 5.300-.3M113 120.300c1.700-.4 3.500-.5 5-.2"/>
<!-- hair behind left -->
<path d="M94.400 121c-.3 4.500.2 9 1.900 12.700c1.200 1.800 2.700 3 4.400 3.800"/>
</g>
</svg>
<svg style="left:339.9px;top:370.6px;background:#fff;" width="37.1" height="20.5" viewBox="-6.7 0 253.4 140"><rect width="248" height="140" fill="#fff"/>
<path d="M102 81.500c-1.500 4-2.500 8.500-2.500 12.700c-.800 7-1.300 13.500-1.300 20.400c.500 9 1.700 17 3.200 25.400h36.300c-.700-4.200-1.300-8.300-1.300-12.500c1.200-6.500 1.900-13 1.900-19.300c0-9-.500-18-1.300-26.700h-4.400c-3.500 4-8.200 7.300-13.400 9.500c-4.300-2.300-8.400-5.500-11.500-9.500z" fill="#b4b4b4"/>
<path d="M98.200 95.500c.800-1.500 2-2.200 3.500-2.300c2.300-.800 4.700-.800 6.500.200c1.200 1.500 1.700 3.500 1.800 5.500c.500 2.500.800 5 .600 7.500c-.500 1.300-1.500 2.200-2.800 2.500l-3.500 3l-3 4.500l-2.500 4.800l-2-9z" fill="#fff"/>
<path d="M117.300 104.500c1-.500 2.200 0 3 1.200c.800 1.500 1.200 3 1.500 4.500l4.400 1.800c3.500 1.500 7 3 10.800 4l1.800 2l-2.400 9.300c-4-2-8.500-4.200-12.700-6.300l-.900 2c-2 .500-4 .500-6 .200c-1.300.300-2.700 0-3.500-1c-.800-2-1.300-4-1.500-6c-.500-1.200-1-2.500-1.200-3.800c.300-1.200 1.200-2 2.500-2.500c1.200-.800 2.500-2 3.400-3.400z" fill="#fff"/>
<g fill="none" stroke="#5c5c5c" stroke-width="1.700" stroke-linecap="round" stroke-linejoin="round">
<!-- ahoge -->
<path d="M122.400 20.800c5-5.500 11.500-12.500 19-18.600c-3.500 6.500-9.500 12.500-17 17.800"/>
<!-- hair left outer -->
<path d="M122.400 21c-3.500-4.500-8-5.500-11.400-5c-5 .800-9.500 3.500-12.800 6.300c-5 3.800-9.200 7.800-12.700 12.100c-3.200 3.500-6 6.300-7.700 8.900c-2 3.500-2.700 7-2.500 10.200c.200 4 1.500 7.400 3.700 10.200c2 2.500 5 4.500 8.400 5.700"/>
<path d="M98.200 22.300c4-3 8-5 12.800-6"/>
<!-- hair right outer, long -->
<path d="M123.700 21c2.500-.800 5.500-.800 7.600 0c3 1.500 5.500 4.500 7.700 8.300c2.500 4.500 4.500 9.300 6.300 14c1.800 5.200 3.700 10.300 6.400 15.300c3 5.500 7 10 10.200 11.400c4 4.500 7.200 10.300 8.900 16.500c1.800 6 3.300 12.500 3.200 19.100c-.300 6.500-2 12.700-4.500 17.900c-3 5-7.500 8.800-12.700 11.500c-5.500 2.500-11.500 4-17.800 4.400"/>
<!-- fringe -->
<path d="M119.200 25.500c-3 4.500-5.200 10.500-5.700 16.500c-.200 4.500.700 8.800 2.500 12.700c1.500 3.500 3.800 6.500 6.400 9"/>
<path d="M119.800 25c-1.500 6-2.300 11.500-1.800 17.500c.500 5 2 10 4.200 14.500"/>
<path d="M119.500 33l1.200 3.500M121.500 40.500c3 .5 6 1.700 8.500 3.500"/>
<!-- brow arcs -->
<path d="M99.500 45c2.500-2.500 6-4.500 10.500-5.300M98.200 49.500c3-2.300 7-3.500 11.500-3.400"/>
<!-- face -->
<path d="M98.200 54.700c.500 4 1.800 7.500 3.800 10.300c2.500 3.500 5.500 6.300 9 8.200c2.500 1.200 5.500 1.500 8.500.800c3-1 5.500-3.300 7.500-6c2.500-3.500 4.500-7.500 5.800-11.500"/>
<!-- eyes -->
<path d="M96.500 52.300c2-1.800 4.500-3 7-3.300h7.500" stroke-width="1"/>
<path d="M102.800 49.500c-.700 1.700-.300 3.500 1 4.500h5c1.500-1 2.200-2.800 2-4.700" fill="#d0d0d0"/>
<path d="M119.500 50.500c2-1.300 4.500-2 7-2c2.500.2 4.800 1 6.500 2.700" stroke-width="0.900"/>
<path d="M121.700 50c-.500 1.800 0 3.500 1.300 4.500h5c1.500-.800 2.200-2.500 2-4.300"/>
<path d="M115 59l1.500.2"/>
<!-- mouth -->
<path d="M112.200 66.800c3.500-.2 7.200-.8 10.800-2c-.800 2.500-2.800 4.300-5.500 4.700c-2.200-.2-4-1.200-5.300-2.700z"/>
<!-- ear -->
<path d="M138 52.500c-.800-3-.300-6.500 1.500-8.200c1.500-1 3 .2 3.300 2.500c.2 2.500-.800 5.500-2.800 7.300"/>
<path d="M134.500 51.500c1.500 2 2.500 4.500 2.500 7.500M133.500 52.500c1 2.500 1.300 5 .8 7.500"/>
<!-- left hair locks -->
<path d="M97 49.700c-4 2.500-7.500 6.500-9.300 11c-1 3.500-.500 7 .800 10.500c-1 3-1.800 6-1.900 9c.8 2.300 2 4.300 3.400 5.800"/>
<path d="M98.200 56c-.500 3.500-2 7-3.800 10.200c-2 3-4 5.500-5.800 8c-1 2-1.800 4-2 6"/>
<path d="M91.200 70c-.700 3.800-1 7.700-.700 11.500h10.200c4-.5 7.800-2 10.300-3.900c.8-1.500 1.300-3 1.500-4.500"/>
<!-- neck -->
<path d="M111.600 72.500c.2 2.200.600 4.500 1.200 6.500M126.200 71.300c.2 2.200.600 4.300 1.300 6.300"/>
<!-- front strand over chest (double) -->
<path d="M136.400 62c.5 4 .3 8-1 11.500c-1.300 3-3.300 5.300-5.800 7.700c-3.500 3-7 6-9.800 9.200"/>
<path d="M134.300 61c.3 4-.200 7.500-1.500 10.500c-1.300 2.800-3.500 5.200-6 7.500c-2.800 2.700-5.500 5.500-7.400 8.800"/>
<!-- top outlines -->
<path d="M107.700 81.500c3 4 7.200 7.200 11.500 9.500c5.200-2.200 9.900-5.500 13.400-9.500"/>
<path d="M102 81.500c-1.500 4-2.500 8.500-2.500 12.700M137 81.500c.8 8.700 1.300 17.700 1.300 26.700"/>
<path d="M98.400 114.600c.5 9 1.600 17 3 25.200M136.400 127.300c0 4.200.6 8.300 1.300 12.500"/>
<!-- left arm -->
<path d="M87.400 84.600c-2 3.500-3.500 7.500-4.500 11.800c-1.500 4.500-3.300 9-5.100 13.300c-1.800 4-3.200 7.800-3.800 11.300c-.800 2.500-.900 4.700-.600 6.300c1 2 2.500 3 4.400 3.200c3.300-.2 6.500-1.500 9.600-3.200c3.500-2.500 6.700-6.200 9.200-10.500l2.500-4.800"/>
<path d="M98.200 95.500c-1 3.500-2.300 7-3.800 10.100c-2.500 2.500-5.500 4.500-8.800 6.300c-3 1.700-5.700 3.500-7.800 5.100"/>
<!-- left fist -->
<path d="M98.200 95.500c.8-1.500 2-2.200 3.500-2.300c2.300-.8 4.700-.8 6.500.2c1.200 1.500 1.700 3.500 1.800 5.500c.5 2.500.8 5 .6 7.500c-.5 1.300-1.500 2.200-2.800 2.500c-1-1.500-1.700-3.500-2-5.500c-.5-2.200-1.300-4.300-2.500-6"/>
<path d="M102.500 97c1.500-.8 3.500-1 5-.5M104.500 100.500l2.500 7.500"/>
<!-- right arm -->
<path d="M137.700 81.500c3-.5 6.200 0 8.900 1.200c2.500 2.500 4 6.200 5.100 10.300c1 6 1.700 12.500 2.500 19c1 4 2.400 8 3.800 11.500c-.2 2.700-1.700 4.800-3.800 6.300c-2.300 1-4.800 1.300-7.600 1.300c-3.500-.5-7-1.900-10.200-3.800c-4-2-8.500-4.200-12.700-6.300"/>
<path d="M126.200 112c3.500 1.500 7 3 10.800 4c3 .5 6 .5 8.800.6c3 .8 6 2 8.400 3.700M138.500 112l3 4.500"/>
<!-- right fist -->
<path d="M117.300 104.500c1-.5 2.200 0 3 1.200c.8 1.500 1.200 3 1.500 4.500c.8 2.500 1.500 5 2 7.500c0 2-.3 3.800-1 5.300c-2 .5-4 .5-6 .2c-1.300.3-2.700 0-3.500-1c-.8-2-1.300-4-1.500-6c-.5-1.200-1-2.500-1.200-3.800c.3-1.200 1.200-2 2.500-2.500c1.200-.8 2.500-2 3.400-3.400c.2-.8.500-1.500.8-2z"/>
<path d="M111.500 112.500c2-.8 4-1 6-.7M112.500 116.500c1.800-.5 3.600-.6 5.300-.3M113 120.300c1.700-.4 3.500-.5 5-.2"/>
<!-- hair behind left -->
<path d="M94.400 121c-.3 4.500.2 9 1.900 12.700c1.200 1.800 2.700 3 4.400 3.800"/>
</g>
</svg>
<svg style="left:501.2px;top:370.6px;background:#fff;" width="37.6" height="20.5" viewBox="-8.4 0 256.8 140"><rect width="248" height="140" fill="#fff"/>
<path d="M102 81.500c-1.500 4-2.500 8.500-2.500 12.700c-.800 7-1.300 13.500-1.300 20.400c.500 9 1.700 17 3.200 25.400h36.300c-.700-4.200-1.300-8.300-1.300-12.500c1.200-6.500 1.900-13 1.900-19.300c0-9-.500-18-1.300-26.700h-4.400c-3.500 4-8.200 7.300-13.400 9.500c-4.300-2.300-8.400-5.500-11.500-9.500z" fill="#b4b4b4"/>
<path d="M98.200 95.500c.800-1.500 2-2.200 3.500-2.300c2.300-.800 4.700-.800 6.500.200c1.200 1.500 1.700 3.500 1.800 5.500c.500 2.500.800 5 .600 7.500c-.500 1.300-1.500 2.200-2.800 2.500l-3.500 3l-3 4.500l-2.500 4.800l-2-9z" fill="#fff"/>
<path d="M117.300 104.500c1-.500 2.200 0 3 1.200c.800 1.500 1.200 3 1.500 4.500l4.400 1.800c3.500 1.500 7 3 10.800 4l1.800 2l-2.400 9.300c-4-2-8.500-4.200-12.700-6.300l-.900 2c-2 .500-4 .500-6 .200c-1.300.300-2.700 0-3.500-1c-.800-2-1.300-4-1.500-6c-.500-1.200-1-2.500-1.200-3.800c.300-1.200 1.200-2 2.500-2.500c1.200-.800 2.500-2 3.400-3.400z" fill="#fff"/>
<g fill="none" stroke="#5c5c5c" stroke-width="1.700" stroke-linecap="round" stroke-linejoin="round">
<!-- ahoge -->
<path d="M122.400 20.800c5-5.500 11.500-12.500 19-18.600c-3.500 6.500-9.500 12.500-17 17.800"/>
<!-- hair left outer -->
<path d="M122.400 21c-3.500-4.500-8-5.500-11.400-5c-5 .800-9.500 3.500-12.800 6.300c-5 3.800-9.200 7.800-12.700 12.100c-3.200 3.500-6 6.300-7.700 8.900c-2 3.500-2.700 7-2.500 10.200c.200 4 1.500 7.400 3.700 10.200c2 2.500 5 4.500 8.400 5.700"/>
<path d="M98.200 22.300c4-3 8-5 12.800-6"/>
<!-- hair right outer, long -->
<path d="M123.700 21c2.500-.800 5.500-.800 7.600 0c3 1.500 5.500 4.500 7.700 8.300c2.500 4.500 4.500 9.300 6.300 14c1.800 5.200 3.700 10.300 6.400 15.300c3 5.500 7 10 10.200 11.400c4 4.500 7.200 10.300 8.900 16.500c1.800 6 3.300 12.500 3.200 19.100c-.300 6.500-2 12.700-4.500 17.900c-3 5-7.500 8.800-12.700 11.500c-5.500 2.500-11.500 4-17.800 4.400"/>
<!-- fringe -->
<path d="M119.200 25.500c-3 4.500-5.200 10.500-5.700 16.500c-.200 4.500.700 8.800 2.500 12.700c1.500 3.500 3.800 6.500 6.400 9"/>
<path d="M119.800 25c-1.500 6-2.300 11.500-1.800 17.500c.500 5 2 10 4.200 14.500"/>
<path d="M119.500 33l1.200 3.500M121.500 40.500c3 .5 6 1.700 8.500 3.500"/>
<!-- brow arcs -->
<path d="M99.500 45c2.500-2.500 6-4.500 10.500-5.300M98.200 49.500c3-2.300 7-3.500 11.500-3.400"/>
<!-- face -->
<path d="M98.200 54.700c.500 4 1.800 7.500 3.800 10.300c2.500 3.500 5.500 6.300 9 8.200c2.500 1.200 5.500 1.500 8.500.800c3-1 5.500-3.300 7.500-6c2.500-3.500 4.500-7.500 5.800-11.500"/>
<!-- eyes -->
<path d="M96.500 52.300c2-1.800 4.500-3 7-3.300h7.500" stroke-width="1"/>
<path d="M102.800 49.500c-.700 1.700-.300 3.500 1 4.500h5c1.500-1 2.200-2.800 2-4.700" fill="#d0d0d0"/>
<path d="M119.500 50.500c2-1.300 4.500-2 7-2c2.500.2 4.800 1 6.500 2.700" stroke-width="0.900"/>
<path d="M121.700 50c-.500 1.800 0 3.500 1.300 4.500h5c1.500-.800 2.200-2.500 2-4.300"/>
<path d="M115 59l1.500.2"/>
<!-- mouth -->
<path d="M112.200 66.800c3.500-.2 7.200-.8 10.800-2c-.800 2.500-2.800 4.300-5.500 4.700c-2.200-.2-4-1.200-5.300-2.700z"/>
<!-- ear -->
<path d="M138 52.500c-.800-3-.300-6.500 1.500-8.200c1.500-1 3 .2 3.300 2.500c.2 2.500-.800 5.500-2.800 7.300"/>
<path d="M134.500 51.500c1.500 2 2.500 4.500 2.500 7.500M133.500 52.500c1 2.500 1.300 5 .8 7.500"/>
<!-- left hair locks -->
<path d="M97 49.700c-4 2.500-7.500 6.500-9.300 11c-1 3.500-.500 7 .800 10.500c-1 3-1.800 6-1.900 9c.8 2.300 2 4.300 3.400 5.800"/>
<path d="M98.200 56c-.500 3.500-2 7-3.800 10.200c-2 3-4 5.500-5.800 8c-1 2-1.800 4-2 6"/>
<path d="M91.200 70c-.700 3.800-1 7.700-.700 11.500h10.200c4-.5 7.800-2 10.300-3.900c.8-1.500 1.300-3 1.500-4.500"/>
<!-- neck -->
<path d="M111.600 72.500c.2 2.200.600 4.500 1.200 6.500M126.200 71.300c.2 2.200.600 4.300 1.300 6.300"/>
<!-- front strand over chest (double) -->
<path d="M136.400 62c.5 4 .3 8-1 11.500c-1.300 3-3.300 5.300-5.800 7.700c-3.500 3-7 6-9.800 9.200"/>
<path d="M134.300 61c.3 4-.200 7.500-1.500 10.500c-1.300 2.800-3.500 5.200-6 7.500c-2.800 2.700-5.500 5.500-7.400 8.800"/>
<!-- top outlines -->
<path d="M107.700 81.500c3 4 7.200 7.200 11.500 9.500c5.200-2.200 9.900-5.500 13.400-9.500"/>
<path d="M102 81.500c-1.500 4-2.500 8.500-2.500 12.700M137 81.500c.8 8.700 1.300 17.700 1.300 26.700"/>
<path d="M98.400 114.600c.5 9 1.600 17 3 25.200M136.400 127.300c0 4.200.6 8.300 1.300 12.500"/>
<!-- left arm -->
<path d="M87.400 84.600c-2 3.500-3.500 7.500-4.500 11.800c-1.500 4.500-3.300 9-5.100 13.300c-1.800 4-3.200 7.800-3.800 11.300c-.800 2.500-.900 4.700-.600 6.300c1 2 2.500 3 4.400 3.200c3.300-.2 6.500-1.500 9.600-3.200c3.500-2.500 6.700-6.200 9.200-10.500l2.500-4.800"/>
<path d="M98.200 95.500c-1 3.500-2.300 7-3.800 10.100c-2.500 2.500-5.500 4.500-8.800 6.300c-3 1.700-5.700 3.500-7.800 5.100"/>
<!-- left fist -->
<path d="M98.200 95.500c.8-1.500 2-2.200 3.500-2.300c2.300-.8 4.700-.8 6.500.2c1.200 1.500 1.700 3.500 1.800 5.500c.5 2.500.8 5 .6 7.500c-.5 1.300-1.500 2.200-2.800 2.500c-1-1.500-1.700-3.500-2-5.500c-.5-2.200-1.300-4.300-2.500-6"/>
<path d="M102.500 97c1.500-.8 3.500-1 5-.5M104.500 100.500l2.500 7.500"/>
<!-- right arm -->
<path d="M137.700 81.500c3-.5 6.200 0 8.900 1.200c2.500 2.500 4 6.200 5.100 10.300c1 6 1.700 12.500 2.500 19c1 4 2.400 8 3.800 11.500c-.2 2.700-1.700 4.800-3.800 6.300c-2.300 1-4.800 1.300-7.600 1.300c-3.500-.5-7-1.900-10.200-3.800c-4-2-8.500-4.200-12.700-6.300"/>
<path d="M126.200 112c3.500 1.500 7 3 10.800 4c3 .5 6 .5 8.800.6c3 .8 6 2 8.400 3.700M138.500 112l3 4.500"/>
<!-- right fist -->
<path d="M117.300 104.500c1-.5 2.200 0 3 1.200c.8 1.500 1.200 3 1.500 4.500c.8 2.500 1.500 5 2 7.500c0 2-.3 3.800-1 5.300c-2 .5-4 .5-6 .2c-1.300.3-2.700 0-3.500-1c-.8-2-1.300-4-1.500-6c-.5-1.200-1-2.500-1.200-3.800c.3-1.200 1.200-2 2.500-2.500c1.200-.8 2.500-2 3.400-3.400c.2-.8.500-1.500.8-2z"/>
<path d="M111.500 112.500c2-.8 4-1 6-.7M112.500 116.500c1.800-.5 3.600-.6 5.300-.3M113 120.300c1.700-.4 3.500-.5 5-.2"/>
<!-- hair behind left -->
<path d="M94.400 121c-.3 4.500.2 9 1.900 12.700c1.200 1.800 2.700 3 4.400 3.800"/>
</g>
</svg>
<span id="t31" class="t" style="left:308.5px;top:357.05px;font-size:10.5px;line-height:14.5px;color:#38758f;font-weight:400;letter-spacing:-0.039px;font-style:italic;font-family:'Liberation Serif',serif;">fx</span>
<span id="t32" class="t" style="left:484.5px;top:357.05px;font-size:10.5px;line-height:14.5px;color:#38758f;font-weight:400;letter-spacing:-0.039px;font-style:italic;font-family:'Liberation Serif',serif;">fx</span>
<span id="t33" class="t" style="left:728px;top:357.05px;font-size:10.5px;line-height:14.5px;color:#38758f;font-weight:400;letter-spacing:-0.039px;font-style:italic;font-family:'Liberation Serif',serif;">fx</span>
<span id="t34" class="t" style="left:347px;top:357.95px;font-size:9.5px;line-height:13.5px;color:#e6e6e6;font-weight:400;letter-spacing:-0.347px;">AnimationROTATION_006.mp4</span>
<span id="t35" class="t" style="left:508.8px;top:357.95px;font-size:9.5px;line-height:13.5px;color:#e6e6e6;font-weight:400;letter-spacing:-0.359px;">AnimationROTATION_006.mp4</span>
<div style="left:186.8px;top:440.3px;width:88.80000000000001px;height:30.69999999999999px;background:#2b5b08;border-radius:2.5px;box-shadow:inset 0 0 0 0.700px #3d7016;"></div>
<div style="left:407.8px;top:440.3px;width:63.0px;height:30.69999999999999px;background:#2b5b08;border-radius:2.5px;box-shadow:inset 0 0 0 0.700px #3d7016;"></div>
<div style="left:501.3px;top:471.9px;width:29.69999999999999px;height:31.0px;background:#2b5b08;border-radius:2.5px;box-shadow:inset 0 0 0 0.700px #3d7016;"></div>
<div style="left:532.2px;top:471.9px;width:205.89999999999998px;height:31.0px;background:#2b5b08;border-radius:2.5px;box-shadow:inset 0 0 0 0.700px #3d7016;"></div>
<div style="left:156.9px;top:504.1px;width:581.2px;height:30.100000000000023px;background:#2b5b08;border-radius:2.5px;box-shadow:inset 0 0 0 0.700px #3d7016;"></div>
<div style="left:156.9px;top:535.7px;width:581.2px;height:30.299999999999955px;background:#2b5b08;border-radius:2.5px;box-shadow:inset 0 0 0 0.700px #3d7016;"></div>
<svg style="left:0px;top:0px;" width="1024" height="589" viewBox="0 0 1024 589"><rect x="187.500" y="454.300" width="87.400" height="0.900" fill="#a4d884"/><path d="M188.0 454.8L188.0 454.80L188.8 454.45L189.6 454.15L190.4 453.65L191.2 453.19L192.0 453.35L192.8 453.24L193.6 452.09L194.4 452.77L195.2 452.72L196.1 451.50L196.9 452.18L197.7 451.50L198.5 451.98L199.3 451.62L200.1 452.39L200.9 451.48L201.7 451.00L202.5 451.59L203.3 451.18L204.1 451.31L204.9 452.44L205.7 451.21L206.5 451.57L207.3 452.15L208.1 452.67L208.9 451.36L209.8 452.10L210.6 451.82L211.4 451.69L212.2 452.04L213.0 451.86L213.8 452.66L214.6 452.21L215.4 452.74L216.2 452.21L217.0 452.35L217.8 453.29L218.6 453.28L219.4 453.22L220.2 452.43L221.0 453.02L221.8 452.84L222.6 453.19L223.4 452.98L224.2 453.12L225.1 453.16L225.9 452.91L226.7 452.92L227.5 452.58L228.3 452.82L229.1 452.56L229.9 452.64L230.7 452.50L231.5 452.83L232.3 453.36L233.1 452.64L233.9 452.54L234.7 452.61L235.5 452.96L236.3 452.82L237.1 453.34L237.9 452.71L238.8 452.99L239.6 453.28L240.4 453.51L241.2 452.74L242.0 452.62L242.8 453.51L243.6 452.83L244.4 453.22L245.2 453.48L246.0 453.36L246.8 452.92L247.6 452.84L248.4 453.63L249.2 453.11L250.0 453.65L250.8 453.05L251.6 453.42L252.4 452.94L253.2 452.88L254.1 453.31L254.9 452.90L255.7 453.50L256.5 453.71L257.3 453.29L258.1 453.77L258.9 453.65L259.7 453.49L260.5 453.34L261.3 453.71L262.1 453.81L262.9 453.19L263.7 453.62L264.5 453.15L265.3 453.21L266.1 453.61L266.9 453.56L267.8 453.53L268.6 453.45L269.4 453.49L270.2 453.53L271.0 453.50L271.8 453.28L272.6 453.59L273.4 453.66L274.2 453.47L275.0 453.80L275.0 454.8z" fill="#a4d884"/><path d="M188.0 470.3L188.0 470.30L188.8 470.04L189.6 469.64L190.4 469.43L191.2 469.18L192.0 468.47L192.8 467.59L193.6 467.64L194.4 467.58L195.2 468.24L196.1 467.69L196.9 467.98L197.7 468.06L198.5 468.10L199.3 467.85L200.1 466.53L200.9 466.63L201.7 466.61L202.5 466.58L203.3 467.69L204.1 467.47L204.9 466.91L205.7 466.76L206.5 466.60L207.3 466.64L208.1 468.08L208.9 467.29L209.8 467.28L210.6 467.64L211.4 468.23L212.2 467.88L213.0 468.50L213.8 467.44L214.6 467.63L215.4 468.11L216.2 468.47L217.0 467.81L217.8 468.25L218.6 467.95L219.4 468.02L220.2 468.42L221.0 468.55L221.8 468.36L222.6 468.55L223.4 468.85L224.2 468.70L225.1 468.17L225.9 468.98L226.7 468.98L227.5 468.37L228.3 468.74L229.1 468.47L229.9 468.54L230.7 468.67L231.5 468.00L232.3 468.83L233.1 468.61L233.9 468.83L234.7 468.39L235.5 468.76L236.3 468.68L237.1 468.29L237.9 468.73L238.8 468.50L239.6 468.16L240.4 468.98L241.2 469.02L242.0 468.87L242.8 468.35L243.6 468.51L244.4 468.89L245.2 468.81L246.0 468.97L246.8 468.71L247.6 469.12L248.4 468.52L249.2 468.36L250.0 468.32L250.8 468.54L251.6 468.36L252.4 469.21L253.2 468.98L254.1 468.41L254.9 468.59L255.7 468.92L256.5 468.49L257.3 468.77L258.1 468.63L258.9 469.07L259.7 469.16L260.5 468.97L261.3 469.23L262.1 469.05L262.9 468.61L263.7 469.11L264.5 469.37L265.3 469.35L266.1 469.26L266.9 468.82L267.8 469.14L268.6 469.20L269.4 469.35L270.2 468.73L271.0 469.13L271.8 469.30L272.6 469.41L273.4 469.42L274.2 469.34L275.0 469.00L275.0 470.3z" fill="#a4d884"/><rect x="408.300" y="454.300" width="61.200" height="0.900" fill="#a4d884"/><path d="M408.5 454.8L408.5 454.69L409.3 454.68L410.1 454.68L410.9 454.67L411.7 454.68L412.5 454.67L413.3 454.72L414.1 454.70L414.9 454.67L415.7 454.69L416.5 454.67L417.3 454.72L418.1 454.70L418.9 454.71L419.7 454.69L420.5 454.69L421.3 454.72L422.1 454.71L422.9 454.71L423.8 454.67L424.6 454.68L425.4 454.72L426.2 454.68L427.0 454.72L427.8 454.69L428.6 454.72L429.4 454.72L430.2 454.67L431.0 454.70L431.8 454.69L432.6 454.58L433.4 454.52L434.2 454.50L435.0 454.15L435.8 454.02L436.6 453.60L437.4 453.57L438.2 452.40L439.0 452.25L439.8 451.51L440.6 451.44L441.4 452.42L442.2 452.52L443.0 453.08L443.8 453.43L444.6 453.82L445.4 453.97L446.2 454.12L447.0 454.50L447.8 454.49L448.6 454.62L449.4 454.67L450.2 454.65L451.0 454.69L451.8 454.70L452.6 454.69L453.4 454.68L454.2 454.72L455.1 454.67L455.9 454.72L456.7 454.68L457.5 454.67L458.3 454.72L459.1 454.68L459.9 454.70L460.7 454.69L461.5 454.72L462.3 454.72L463.1 454.71L463.9 454.67L464.7 454.71L465.5 454.68L466.3 454.67L467.1 454.67L467.9 454.70L468.7 454.70L469.5 454.69L469.5 454.8z" fill="#a4d884"/><path d="M408.5 470.3L408.5 470.18L409.3 470.17L410.1 470.20L410.9 470.21L411.7 470.23L412.5 470.18L413.3 470.20L414.1 470.18L414.9 470.20L415.7 470.18L416.5 470.21L417.3 470.18L418.1 470.18L418.9 470.20L419.7 470.19L420.5 470.18L421.3 470.21L422.1 470.19L422.9 470.18L423.8 470.21L424.6 470.18L425.4 470.18L426.2 470.17L427.0 470.20L427.8 470.22L428.6 470.18L429.4 470.17L430.2 470.19L431.0 470.21L431.8 470.19L432.6 470.12L433.4 470.10L434.2 469.87L435.0 469.76L435.8 469.67L436.6 469.11L437.4 468.94L438.2 467.91L439.0 467.46L439.8 467.69L440.6 467.34L441.4 467.30L442.2 467.38L443.0 467.58L443.8 469.05L444.6 469.10L445.4 469.31L446.2 469.73L447.0 469.85L447.8 470.08L448.6 470.06L449.4 470.15L450.2 470.20L451.0 470.18L451.8 470.20L452.6 470.21L453.4 470.20L454.2 470.22L455.1 470.21L455.9 470.17L456.7 470.18L457.5 470.22L458.3 470.18L459.1 470.22L459.9 470.20L460.7 470.17L461.5 470.19L462.3 470.21L463.1 470.20L463.9 470.20L464.7 470.22L465.5 470.16L466.3 470.22L467.1 470.20L467.9 470.18L468.7 470.20L469.5 470.17L469.5 470.3z" fill="#a4d884"/><path d="M502.0 486.3L502.0 485.22L502.8 484.52L503.6 485.09L504.4 484.37L505.3 484.83L506.1 484.46L506.9 483.20L507.7 484.10L508.5 483.19L509.3 483.30L510.1 483.17L511.0 483.00L511.8 483.56L512.6 482.39L513.4 483.89L514.2 483.76L515.0 484.29L515.8 484.09L516.7 484.12L517.5 483.75L518.3 484.58L519.1 485.02L519.9 485.02L520.7 484.56L521.5 485.37L522.4 485.05L523.2 485.27L524.0 485.13L524.8 485.35L525.6 485.16L526.4 485.28L527.2 485.20L528.1 485.06L528.9 485.24L529.7 485.50L530.5 485.54L530.5 486.3z" fill="#a4d884"/><path d="M502.0 502.3L502.0 501.04L502.8 501.00L503.6 501.08L504.4 500.21L505.3 500.92L506.1 500.14L506.9 499.34L507.7 500.30L508.5 499.33L509.3 499.02L510.1 499.94L511.0 499.22L511.8 498.58L512.6 499.11L513.4 498.72L514.2 499.90L515.0 499.94L515.8 500.33L516.7 499.99L517.5 499.72L518.3 500.36L519.1 500.39L519.9 500.92L520.7 500.76L521.5 501.34L522.4 501.27L523.2 501.08L524.0 501.09L524.8 501.30L525.6 501.52L526.4 501.42L527.2 501.46L528.1 501.42L528.9 501.11L529.7 501.46L530.5 501.05L530.5 502.3z" fill="#a4d884"/><path d="M533.0 486.3L533.0 484.96L533.8 484.96L534.6 484.70L535.4 484.89L536.2 484.07L537.0 483.80L537.8 483.76L538.6 484.24L539.4 483.48L540.2 483.61L541.0 483.60L541.8 482.17L542.6 482.01L543.4 483.86L544.2 482.37L545.0 482.98L545.8 483.55L546.6 483.90L547.4 483.52L548.2 484.07L549.0 484.02L549.8 484.28L550.7 484.99L551.5 484.56L552.3 484.54L553.1 484.69L553.9 485.04L554.7 485.47L555.5 485.53L556.3 485.47L557.1 485.00L557.9 485.40L558.7 485.37L559.5 485.06L560.3 485.40L561.1 485.26L561.9 485.32L562.7 485.53L563.5 485.21L564.3 485.02L565.1 485.42L565.9 485.34L566.7 485.15L567.5 485.35L568.3 484.88L569.1 484.45L569.9 484.41L570.7 484.33L571.5 483.71L572.3 484.40L573.1 483.58L573.9 483.67L574.7 483.09L575.5 483.83L576.3 482.49L577.1 483.75L577.9 483.63L578.7 482.49L579.5 482.40L580.3 483.50L581.1 483.73L581.9 484.19L582.7 484.35L583.5 484.15L584.4 484.83L585.2 485.03L586.0 484.86L586.8 485.21L587.6 484.94L588.4 484.91L589.2 485.00L590.0 485.24L590.8 485.34L591.6 485.31L592.4 485.57L593.2 485.16L594.0 485.39L594.8 485.40L595.6 485.54L596.4 485.31L597.2 485.22L598.0 485.32L598.8 485.00L599.6 485.08L600.4 485.31L601.2 485.05L602.0 484.65L602.8 484.83L603.6 484.61L604.4 484.98L605.2 484.33L606.0 484.15L606.8 484.01L607.6 483.76L608.4 483.28L609.2 483.16L610.0 483.11L610.8 483.64L611.6 483.08L612.4 482.10L613.2 483.25L614.0 484.07L614.8 484.26L615.6 483.59L616.4 484.51L617.2 484.63L618.0 484.78L618.9 484.58L619.7 484.25L620.5 484.87L621.3 485.01L622.1 485.12L622.9 485.14L623.7 485.23L624.5 485.09L625.3 485.01L626.1 485.15L626.9 485.33L627.7 485.20L628.5 485.05L629.3 485.49L630.1 485.44L630.9 485.21L631.7 485.16L632.5 485.16L633.3 485.17L634.1 484.97L634.9 485.14L635.7 484.82L636.5 484.58L637.3 484.88L638.1 484.33L638.9 484.25L639.7 483.82L640.5 484.64L641.3 483.22L642.1 483.17L642.9 482.59L643.7 482.33L644.5 483.47L645.3 482.66L646.1 483.66L646.9 482.83L647.7 482.35L648.5 483.82L649.3 483.72L650.1 484.33L650.9 484.35L651.7 484.52L652.6 484.83L653.4 484.07L654.2 484.39L655.0 484.91L655.8 484.81L656.6 484.95L657.4 485.14L658.2 485.25L659.0 485.14L659.8 485.23L660.6 485.41L661.4 485.36L662.2 485.21L663.0 485.22L663.8 485.46L664.6 485.22L665.4 485.06L666.2 485.04L667.0 485.15L667.8 485.49L668.6 485.22L669.4 485.39L670.2 485.36L671.0 485.12L671.8 484.83L672.6 484.38L673.4 484.30L674.2 484.49L675.0 483.74L675.8 483.76L676.6 483.53L677.4 483.74L678.2 483.27L679.0 483.34L679.8 482.54L680.6 483.01L681.4 483.13L682.2 483.19L683.0 483.35L683.8 483.21L684.6 483.42L685.4 483.57L686.2 484.32L687.1 484.10L687.9 484.16L688.7 484.34L689.5 484.73L690.3 485.34L691.1 484.86L691.9 484.94L692.7 485.52L693.5 485.35L694.3 485.37L695.1 485.13L695.9 485.22L696.7 485.42L697.5 485.47L698.3 485.48L699.1 485.52L699.9 485.10L700.7 485.00L701.5 485.41L702.3 485.05L703.1 484.86L703.9 485.31L704.7 484.95L705.5 484.95L706.3 484.33L707.1 484.22L707.9 484.93L708.7 484.55L709.5 483.48L710.3 483.61L711.1 483.46L711.9 482.76L712.7 482.65L713.5 482.16L714.3 483.31L715.1 483.85L715.9 482.69L716.7 484.00L717.5 483.25L718.3 483.00L719.1 483.95L719.9 483.90L720.8 484.64L721.6 484.83L722.4 484.55L723.2 484.49L724.0 484.54L724.8 485.38L725.6 484.83L726.4 485.17L727.2 485.31L728.0 485.31L728.8 485.22L729.6 485.37L730.4 485.50L731.2 485.08L732.0 485.17L732.8 485.22L733.6 485.15L734.4 484.98L735.2 485.45L736.0 485.03L736.8 484.99L737.6 485.25L737.6 486.3z" fill="#a4d884"/><path d="M533.0 502.3L533.0 501.05L533.8 500.86L534.6 500.39L535.4 500.64L536.2 500.40L537.0 500.09L537.8 500.40L538.6 499.72L539.4 499.30L540.2 498.80L541.0 499.89L541.8 499.40L542.6 499.76L543.4 498.38L544.2 498.68L545.0 500.00L545.8 498.52L546.6 498.81L547.4 499.55L548.2 499.86L549.0 500.65L549.8 500.97L550.7 500.61L551.5 501.18L552.3 501.17L553.1 501.22L553.9 501.44L554.7 501.20L555.5 501.25L556.3 501.04L557.1 501.25L557.9 501.20L558.7 501.29L559.5 501.20L560.3 501.32L561.1 501.42L561.9 500.99L562.7 500.98L563.5 501.05L564.3 501.11L565.1 501.32L565.9 501.33L566.7 501.23L567.5 501.32L568.3 500.66L569.1 500.83L569.9 500.22L570.7 500.49L571.5 499.58L572.3 499.44L573.1 500.44L573.9 499.94L574.7 498.55L575.5 499.17L576.3 498.10L577.1 499.17L577.9 499.81L578.7 498.83L579.5 498.71L580.3 499.78L581.1 500.25L581.9 500.07L582.7 499.46L583.5 499.98L584.4 500.89L585.2 500.91L586.0 501.17L586.8 501.30L587.6 500.84L588.4 501.35L589.2 501.14L590.0 501.26L590.8 501.44L591.6 501.13L592.4 501.50L593.2 501.20L594.0 501.52L594.8 501.34L595.6 501.46L596.4 501.42L597.2 500.99L598.0 501.07L598.8 501.35L599.6 500.94L600.4 501.33L601.2 501.14L602.0 500.70L602.8 500.73L603.6 501.07L604.4 500.02L605.2 500.65L606.0 500.41L606.8 499.48L607.6 499.90L608.4 499.76L609.2 499.99L610.0 499.85L610.8 498.84L611.6 499.46L612.4 498.81L613.2 499.33L614.0 499.32L614.8 498.66L615.6 499.67L616.4 499.77L617.2 499.64L618.0 500.69L618.9 500.89L619.7 500.33L620.5 500.59L621.3 501.17L622.1 501.29L622.9 500.98L623.7 500.91L624.5 501.42L625.3 500.98L626.1 501.04L626.9 501.22L627.7 501.33L628.5 501.52L629.3 501.56L630.1 501.02L630.9 501.44L631.7 501.15L632.5 501.40L633.3 501.02L634.1 501.12L634.9 501.27L635.7 501.28L636.5 500.77L637.3 501.19L638.1 500.92L638.9 500.42L639.7 499.86L640.5 499.90L641.3 500.13L642.1 498.93L642.9 499.88L643.7 500.07L644.5 499.50L645.3 499.09L646.1 499.82L646.9 499.63L647.7 499.36L648.5 499.15L649.3 500.08L650.1 499.90L650.9 499.39L651.7 499.56L652.6 500.20L653.4 500.38L654.2 500.67L655.0 501.18L655.8 501.35L656.6 501.43L657.4 500.88L658.2 501.07L659.0 500.95L659.8 501.55L660.6 501.19L661.4 501.29L662.2 501.15L663.0 501.40L663.8 501.00L664.6 501.54L665.4 501.25L666.2 501.12L667.0 501.00L667.8 501.06L668.6 501.04L669.4 500.91L670.2 500.72L671.0 501.04L671.8 500.63L672.6 500.24L673.4 500.04L674.2 500.33L675.0 499.61L675.8 499.23L676.6 499.43L677.4 499.12L678.2 499.38L679.0 498.89L679.8 498.77L680.6 499.78L681.4 498.77L682.2 498.25L683.0 498.66L683.8 499.15L684.6 499.91L685.4 499.66L686.2 500.11L687.1 500.49L687.9 500.28L688.7 501.14L689.5 500.71L690.3 501.37L691.1 501.03L691.9 501.18L692.7 501.38L693.5 501.12L694.3 501.27L695.1 501.21L695.9 501.04L696.7 501.43L697.5 501.58L698.3 501.41L699.1 501.18L699.9 501.45L700.7 501.46L701.5 500.99L702.3 501.10L703.1 501.20L703.9 500.82L704.7 501.14L705.5 500.76L706.3 501.03L707.1 500.66L707.9 500.06L708.7 499.67L709.5 499.43L710.3 499.89L711.1 499.36L711.9 499.62L712.7 499.80L713.5 499.03L714.3 498.32L715.1 498.31L715.9 498.66L716.7 498.37L717.5 499.74L718.3 500.09L719.1 499.87L719.9 500.33L720.8 500.59L721.6 500.56L722.4 500.53L723.2 500.81L724.0 501.08L724.8 500.79L725.6 500.79L726.4 501.21L727.2 501.49L728.0 501.53L728.8 501.04L729.6 501.55L730.4 501.16L731.2 501.25L732.0 501.40L732.8 501.12L733.6 501.57L734.4 501.49L735.2 501.28L736.0 501.53L736.8 500.99L737.6 501.32L737.6 502.3z" fill="#a4d884"/><rect x="502" y="485.800" width="28.500" height="0.800" fill="#a4d884"/><rect x="533" y="485.800" width="204.600" height="0.800" fill="#a4d884"/><rect x="158" y="532.600" width="579.600" height="1" fill="#a4d884"/><path d="M158.0 533.0L158.0 531.74L158.8 531.54L159.6 531.46L160.4 531.84L161.2 531.91L162.0 531.54L162.8 531.58L163.6 531.02L164.4 531.09L165.2 531.14L166.0 531.16L166.8 531.03L167.6 531.56L168.4 531.25L169.2 531.55L170.0 530.79L170.8 531.69L171.6 530.95L172.4 531.73L173.2 531.18L174.0 531.57L174.8 531.56L175.6 531.25L176.4 531.99L177.2 532.01L178.0 531.43L178.8 531.80L179.6 532.13L180.4 531.61L181.2 531.70L182.0 532.23L182.8 532.08L183.6 532.26L184.4 532.17L185.2 532.00L186.0 532.24L186.8 531.92L187.6 532.25L188.4 532.14L189.2 531.67L190.0 531.88L190.8 531.79L191.6 531.57L192.4 531.57L193.2 531.56L194.0 531.80L194.8 531.03L195.6 530.67L196.4 530.54L197.2 530.80L198.0 531.09L198.8 531.02L199.6 530.55L200.4 530.53L201.2 531.24L202.0 531.07L202.8 530.90L203.6 530.72L204.4 530.37L205.2 530.82L206.0 531.46L206.8 530.57L207.6 531.11L208.4 531.10L209.2 531.51L210.0 531.39L210.8 531.52L211.6 531.29L212.4 531.94L213.2 531.67L214.0 532.02L214.8 531.75L215.6 532.22L216.4 532.12L217.2 532.12L218.0 531.98L218.8 532.31L219.6 532.09L220.4 532.21L221.2 532.14L222.0 531.99L222.8 531.63L223.6 531.86L224.4 531.45L225.2 531.95L226.0 531.26L226.8 531.64L227.6 531.71L228.4 531.10L229.2 530.84L230.0 531.70L230.9 531.37L231.7 530.74L232.5 531.18L233.3 531.27L234.1 531.52L234.9 531.47L235.7 530.77L236.5 530.34L237.3 530.35L238.1 530.98L238.9 531.57L239.7 531.28L240.5 530.83L241.3 530.87L242.1 531.15L242.9 531.62L243.7 531.42L244.5 531.55L245.3 531.50L246.1 531.87L246.9 531.44L247.7 531.56L248.5 532.10L249.3 532.07L250.1 531.76L250.9 532.15L251.7 531.80L252.5 532.05L253.3 531.96L254.1 531.96L254.9 532.21L255.7 532.15L256.5 532.15L257.3 531.86L258.1 531.80L258.9 532.11L259.7 531.56L260.5 531.82L261.3 531.90L262.1 531.69L262.9 531.19L263.7 531.47L264.5 531.36L265.3 531.03L266.1 530.93L266.9 531.07L267.7 531.37L268.5 531.17L269.3 530.83L270.1 530.92L270.9 531.13L271.7 531.38L272.5 531.37L273.3 531.01L274.1 531.22L274.9 531.79L275.7 531.16L276.5 531.04L277.3 531.20L278.1 531.18L278.9 531.25L279.7 531.62L280.5 531.49L281.3 531.86L282.1 532.10L282.9 531.98L283.7 532.05L284.5 531.73L285.3 531.91L286.1 532.02L286.9 532.00L287.7 532.27L288.5 532.05L289.3 531.94L290.1 532.08L290.9 532.13L291.7 531.99L292.5 531.99L293.3 531.67L294.1 531.99L294.9 531.96L295.7 531.71L296.5 531.28L297.3 531.12L298.1 531.11L298.9 530.72L299.7 531.24L300.5 531.56L301.3 530.96L302.1 530.95L302.9 531.23L303.7 530.58L304.5 530.97L305.3 531.10L306.1 530.99L306.9 530.21L307.7 531.44L308.5 531.03L309.3 531.19L310.1 531.34L310.9 531.15L311.7 531.46L312.5 530.83L313.3 531.35L314.1 531.27L314.9 531.83L315.7 531.67L316.5 531.66L317.3 531.58L318.1 532.05L318.9 531.98L319.7 531.80L320.5 531.86L321.3 532.21L322.1 532.05L322.9 531.92L323.7 532.10L324.5 531.91L325.3 531.86L326.1 531.59L326.9 531.79L327.7 531.61L328.5 531.78L329.3 531.38L330.1 531.63L330.9 531.38L331.7 531.43L332.5 531.41L333.3 531.52L334.1 531.36L334.9 530.94L335.7 531.23L336.5 531.45L337.3 530.49L338.1 531.12L338.9 530.31L339.7 530.74L340.5 531.03L341.3 530.48L342.1 530.51L342.9 531.24L343.7 531.52L344.5 531.03L345.3 530.91L346.1 531.24L346.9 531.17L347.7 531.59L348.5 531.50L349.3 531.86L350.1 531.82L350.9 531.91L351.7 531.96L352.5 532.01L353.3 531.81L354.1 532.21L354.9 532.21L355.7 532.20L356.5 531.82L357.3 532.05L358.1 532.30L358.9 531.83L359.7 531.77L360.5 531.76L361.3 531.99L362.1 531.70L362.9 531.93L363.7 532.00L364.5 531.40L365.3 531.35L366.1 531.80L366.9 531.17L367.7 531.88L368.5 531.58L369.3 531.82L370.1 531.64L370.9 531.62L371.7 531.04L372.5 531.45L373.3 531.55L374.1 531.56L374.9 531.43L375.8 530.89L376.6 531.18L377.4 531.70L378.2 531.18L379.0 531.36L379.8 531.49L380.6 531.48L381.4 531.43L382.2 531.38L383.0 531.68L383.8 531.64L384.6 531.83L385.4 531.77L386.2 531.98L387.0 532.01L387.8 531.99L388.6 531.91L389.4 532.17L390.2 531.84L391.0 532.07L391.8 531.87L392.6 531.94L393.4 531.76L394.2 531.87L395.0 531.97L395.8 531.93L396.6 531.73L397.4 531.54L398.2 531.38L399.0 531.87L399.8 531.86L400.6 531.75L401.4 531.70L402.2 531.67L403.0 531.66L403.8 531.33L404.6 531.43L405.4 530.70L406.2 530.73L407.0 530.26L407.8 530.23L408.6 530.49L409.4 530.24L410.2 531.43L411.0 531.20L411.8 530.40L412.6 531.00L413.4 531.37L414.2 530.84L415.0 531.28L415.8 531.25L416.6 531.56L417.4 531.71L418.2 531.92L419.0 531.59L419.8 531.43L420.6 531.51L421.4 531.74L422.2 531.71L423.0 532.09L423.8 532.16L424.6 531.84L425.4 532.02L426.2 531.97L427.0 532.31L427.8 532.15L428.6 531.95L429.4 531.72L430.2 531.57L431.0 531.53L431.8 531.75L432.6 531.63L433.4 531.11L434.2 530.87L435.0 531.26L435.8 531.48L436.6 530.93L437.4 530.95L438.2 531.10L439.0 531.21L439.8 530.98L440.6 530.66L441.4 531.27L442.2 530.74L443.0 530.23L443.8 530.53L444.6 531.18L445.4 531.03L446.2 531.46L447.0 530.80L447.8 531.01L448.6 531.57L449.4 531.28L450.2 531.32L451.0 531.44L451.8 531.69L452.6 531.82L453.4 531.86L454.2 531.49L455.0 532.00L455.8 531.95L456.6 532.02L457.4 532.21L458.2 532.11L459.0 532.23L459.8 532.17L460.6 532.13L461.4 532.13L462.2 531.76L463.0 532.10L463.8 532.04L464.6 531.78L465.4 531.90L466.2 531.76L467.0 531.60L467.8 531.98L468.6 531.45L469.4 531.87L470.2 531.69L471.0 531.13L471.8 530.91L472.6 531.16L473.4 531.62L474.2 531.33L475.0 531.47L475.8 530.88L476.6 531.50L477.4 531.55L478.2 531.11L479.0 531.13L479.8 531.21L480.6 531.35L481.4 530.94L482.2 531.46L483.0 531.09L483.8 531.62L484.6 531.62L485.4 531.76L486.2 531.55L487.0 531.59L487.8 532.01L488.6 531.86L489.4 531.79L490.2 531.97L491.0 531.92L491.8 531.97L492.6 531.94L493.4 532.15L494.2 532.17L495.0 532.32L495.8 531.82L496.6 531.84L497.4 532.04L498.2 531.63L499.0 531.60L499.8 532.04L500.6 531.48L501.4 531.71L502.2 531.72L503.0 531.70L503.8 531.48L504.6 531.75L505.4 531.69L506.2 531.57L507.0 531.30L507.8 531.42L508.6 531.42L509.4 530.53L510.2 531.04L511.0 530.89L511.8 530.74L512.6 530.34L513.4 531.33L514.2 531.25L515.0 530.55L515.8 530.56L516.6 530.62L517.4 531.14L518.2 531.39L519.0 531.64L519.8 531.06L520.7 531.30L521.5 531.57L522.3 531.48L523.1 531.95L523.9 531.84L524.7 531.67L525.5 532.21L526.3 531.96L527.1 532.23L527.9 531.89L528.7 531.88L529.5 531.97L530.3 532.06L531.1 532.26L531.9 531.93L532.7 531.95L533.5 531.85L534.3 532.01L535.1 531.26L535.9 531.48L536.7 531.34L537.5 530.96L538.3 530.79L539.1 531.06L539.9 530.97L540.7 530.53L541.5 531.04L542.3 530.32L543.1 531.40L543.9 530.37L544.7 530.71L545.5 530.59L546.3 530.13L547.1 531.15L547.9 530.96L548.7 530.53L549.5 530.67L550.3 531.01L551.1 530.82L551.9 531.03L552.7 530.94L553.5 531.26L554.3 531.62L555.1 531.76L555.9 532.00L556.7 532.03L557.5 532.14L558.3 531.60L559.1 532.17L559.9 531.94L560.7 532.24L561.5 531.80L562.3 532.05L563.1 532.24L563.9 531.88L564.7 531.83L565.5 531.72L566.3 532.13L567.1 531.97L567.9 531.75L568.7 531.95L569.5 531.69L570.3 531.52L571.1 531.41L571.9 531.27L572.7 531.26L573.5 531.62L574.3 531.13L575.1 531.39L575.9 531.62L576.7 531.74L577.5 531.11L578.3 531.37L579.1 531.63L579.9 531.22L580.7 531.31L581.5 531.42L582.3 531.20L583.1 531.26L583.9 531.31L584.7 530.93L585.5 531.07L586.3 531.67L587.1 531.24L587.9 531.76L588.7 531.34L589.5 532.06L590.3 531.92L591.1 531.56L591.9 531.80L592.7 531.82L593.5 532.16L594.3 532.23L595.1 531.79L595.9 532.30L596.7 532.24L597.5 532.11L598.3 531.88L599.1 531.94L599.9 531.72L600.7 531.80L601.5 531.96L602.3 531.59L603.1 531.93L603.9 532.06L604.7 531.30L605.5 531.26L606.3 531.36L607.1 531.44L607.9 531.63L608.7 531.55L609.5 531.65L610.3 531.57L611.1 531.09L611.9 530.57L612.7 530.47L613.5 530.94L614.3 530.73L615.1 530.97L615.9 530.61L616.7 530.72L617.5 530.43L618.3 530.64L619.1 530.90L619.9 531.06L620.7 531.57L621.5 531.34L622.3 531.44L623.1 531.78L623.9 531.82L624.7 531.72L625.5 531.97L626.3 531.73L627.1 532.00L627.9 531.65L628.7 531.89L629.5 532.02L630.3 532.09L631.1 532.13L631.9 532.23L632.7 531.79L633.5 531.78L634.3 531.88L635.1 531.81L635.9 532.08L636.7 531.73L637.5 531.93L638.3 531.72L639.1 531.40L639.9 531.68L640.7 531.54L641.5 530.93L642.3 531.09L643.1 530.53L643.9 531.32L644.7 531.36L645.5 530.23L646.3 530.61L647.1 530.46L647.9 530.63L648.7 531.18L649.5 530.10L650.3 530.77L651.1 530.29L651.9 531.31L652.7 531.21L653.5 530.96L654.3 531.38L655.1 530.82L655.9 531.53L656.7 531.79L657.5 531.79L658.3 531.77L659.1 531.33L659.9 531.49L660.7 531.72L661.5 531.95L662.3 532.24L663.1 531.82L663.9 532.25L664.7 532.23L665.6 532.10L666.4 531.87L667.2 532.23L668.0 532.27L668.8 531.75L669.6 532.24L670.4 531.74L671.2 532.07L672.0 531.91L672.8 531.92L673.6 531.68L674.4 531.21L675.2 531.20L676.0 531.40L676.8 531.77L677.6 531.64L678.4 531.48L679.2 530.94L680.0 530.78L680.8 531.69L681.6 531.35L682.4 530.69L683.2 531.55L684.0 531.64L684.8 531.46L685.6 530.86L686.4 531.53L687.2 531.13L688.0 531.75L688.8 531.30L689.6 531.79L690.4 531.49L691.2 531.44L692.0 531.40L692.8 531.80L693.6 531.47L694.4 531.93L695.2 531.63L696.0 531.71L696.8 531.71L697.6 532.25L698.4 532.18L699.2 531.96L700.0 531.86L700.8 532.20L701.6 531.91L702.4 532.04L703.2 532.29L704.0 532.21L704.8 532.22L705.6 532.04L706.4 531.49L707.2 531.60L708.0 531.38L708.8 531.24L709.6 531.60L710.4 531.26L711.2 531.22L712.0 531.10L712.8 531.65L713.6 530.76L714.4 531.49L715.2 531.13L716.0 530.82L716.8 530.73L717.6 530.62L718.4 531.22L719.2 531.24L720.0 530.77L720.8 531.57L721.6 530.69L722.4 531.36L723.2 531.33L724.0 531.48L724.8 531.16L725.6 531.74L726.4 531.84L727.2 531.96L728.0 531.97L728.8 531.68L729.6 531.51L730.4 532.22L731.2 531.99L732.0 532.09L732.8 532.15L733.6 532.15L734.4 532.28L735.2 532.10L736.0 532.17L736.8 532.26L737.6 532.18L737.6 533.0z" fill="#a4d884"/><rect x="158" y="549.100" width="579.600" height="0.800" fill="#8dbf68"/><path d="M158.0 565.6L158.0 565.20L158.8 565.06L159.6 565.03L160.4 564.96L161.2 565.14L162.0 565.11L162.8 565.12L163.6 565.08L164.4 564.88L165.2 565.10L166.0 564.94L166.8 565.05L167.6 565.02L168.4 564.96L169.2 564.81L170.0 564.90L170.8 565.14L171.6 565.05L172.4 565.11L173.2 564.87L174.0 564.91L174.8 564.94L175.6 564.96L176.4 565.02L177.2 564.99L178.0 565.06L178.8 565.22L179.6 565.10L180.4 565.21L181.2 565.16L182.0 565.22L182.8 565.26L183.6 565.28L184.4 565.27L185.2 565.30L186.0 565.33L186.8 565.18L187.6 565.17L188.4 565.10L189.2 565.14L190.0 565.15L190.8 565.07L191.6 565.21L192.4 565.01L193.2 565.05L194.0 565.11L194.8 565.07L195.6 564.92L196.4 564.99L197.2 564.88L198.0 564.79L198.8 564.86L199.6 564.97L200.4 564.78L201.2 564.90L202.0 564.89L202.8 564.91L203.6 564.84L204.4 564.99L205.2 564.73L206.0 564.62L206.8 564.90L207.6 564.79L208.4 564.74L209.2 565.12L210.0 565.11L210.8 564.92L211.6 564.95L212.4 565.05L213.2 565.22L214.0 565.18L214.8 565.10L215.6 565.12L216.4 565.17L217.2 565.31L218.0 565.18L218.8 565.28L219.6 565.21L220.4 565.32L221.2 565.14L222.0 565.20L222.8 565.15L223.6 565.25L224.4 565.12L225.2 565.10L226.0 565.06L226.8 565.10L227.6 564.95L228.4 565.05L229.2 565.04L230.0 565.06L230.9 564.83L231.7 565.05L232.5 564.98L233.3 565.04L234.1 564.78L234.9 564.81L235.7 564.82L236.5 565.04L237.3 564.87L238.1 564.93L238.9 565.05L239.7 565.10L240.5 564.72L241.3 565.09L242.1 565.04L242.9 565.08L243.7 565.00L244.5 565.19L245.3 565.10L246.1 565.16L246.9 565.06L247.7 565.29L248.5 565.23L249.3 565.21L250.1 565.13L250.9 565.24L251.7 565.26L252.5 565.22L253.3 565.30L254.1 565.35L254.9 565.25L255.7 565.16L256.5 565.18L257.3 565.27L258.1 565.16L258.9 565.10L259.7 565.23L260.5 565.12L261.3 565.16L262.1 565.18L262.9 565.14L263.7 565.15L264.5 565.09L265.3 565.17L266.1 565.04L266.9 565.13L267.7 564.88L268.5 564.92L269.3 565.14L270.1 564.84L270.9 565.06L271.7 564.95L272.5 564.93L273.3 565.02L274.1 565.05L274.9 565.01L275.7 565.13L276.5 564.89L277.3 565.16L278.1 564.96L278.9 565.17L279.7 565.16L280.5 565.16L281.3 565.27L282.1 565.26L282.9 565.23L283.7 565.22L284.5 565.15L285.3 565.14L286.1 565.34L286.9 565.25L287.7 565.33L288.5 565.20L289.3 565.29L290.1 565.16L290.9 565.22L291.7 565.29L292.5 565.31L293.3 565.23L294.1 565.03L294.9 565.20L295.7 565.08L296.5 565.08L297.3 565.05L298.1 564.86L298.9 565.04L299.7 564.81L300.5 564.80L301.3 564.66L302.1 564.81L302.9 564.61L303.7 564.82L304.5 564.75L305.3 564.72L306.1 564.62L306.9 564.60L307.7 564.98L308.5 564.98L309.3 564.82L310.1 564.73L310.9 564.88L311.7 565.00L312.5 564.79L313.3 565.07L314.1 565.17L314.9 565.21L315.7 565.24L316.5 565.07L317.3 565.27L318.1 565.14L318.9 565.13L319.7 565.13L320.5 565.18L321.3 565.27L322.1 565.23L322.9 565.19L323.7 565.20L324.5 565.28L325.3 565.16L326.1 565.29L326.9 565.22L327.7 565.01L328.5 565.12L329.3 565.15L330.1 564.95L330.9 565.02L331.7 565.15L332.5 565.12L333.3 565.01L334.1 564.95L334.9 564.67L335.7 564.95L336.5 564.67L337.3 564.66L338.1 564.85L338.9 564.59L339.7 564.70L340.5 564.83L341.3 564.95L342.1 564.87L342.9 564.71L343.7 564.89L344.5 565.05L345.3 565.01L346.1 565.00L346.9 565.13L347.7 565.03L348.5 565.23L349.3 565.03L350.1 565.23L350.9 565.27L351.7 565.17L352.5 565.26L353.3 565.15L354.1 565.24L354.9 565.25L355.7 565.19L356.5 565.32L357.3 565.21L358.1 565.22L358.9 565.26L359.7 565.13L360.5 565.32L361.3 565.11L362.1 565.27L362.9 565.07L363.7 565.23L364.5 565.24L365.3 565.09L366.1 564.94L366.9 565.13L367.7 565.04L368.5 564.98L369.3 565.09L370.1 564.97L370.9 565.15L371.7 564.98L372.5 564.86L373.3 565.01L374.1 565.06L374.9 565.12L375.8 564.89L376.6 565.00L377.4 564.83L378.2 564.91L379.0 565.15L379.8 564.89L380.6 564.91L381.4 564.98L382.2 565.00L383.0 565.07L383.8 565.08L384.6 565.12L385.4 565.16L386.2 565.26L387.0 565.30L387.8 565.18L388.6 565.22L389.4 565.34L390.2 565.23L391.0 565.24L391.8 565.25L392.6 565.19L393.4 565.16L394.2 565.25L395.0 565.13L395.8 565.19L396.6 565.14L397.4 565.16L398.2 564.98L399.0 565.09L399.8 564.89L400.6 565.06L401.4 564.91L402.2 564.78L403.0 564.84L403.8 564.94L404.6 565.04L405.4 564.85L406.2 564.86L407.0 564.66L407.8 564.67L408.6 564.57L409.4 564.82L410.2 564.85L411.0 564.79L411.8 564.72L412.6 565.04L413.4 565.00L414.2 565.05L415.0 565.01L415.8 565.05L416.6 564.85L417.4 565.14L418.2 564.95L419.0 565.17L419.8 565.22L420.6 565.06L421.4 565.30L422.2 565.31L423.0 565.32L423.8 565.34L424.6 565.28L425.4 565.32L426.2 565.32L427.0 565.35L427.8 565.19L428.6 565.31L429.4 565.25L430.2 565.14L431.0 565.02L431.8 565.05L432.6 565.00L433.4 564.96L434.2 564.89L435.0 564.82L435.8 565.06L436.6 565.08L437.4 564.81L438.2 564.83L439.0 564.81L439.8 564.68L440.6 564.95L441.4 564.69L442.2 564.83L443.0 564.83L443.8 564.92L444.6 564.92L445.4 564.81L446.2 564.84L447.0 564.72L447.8 565.01L448.6 564.87L449.4 565.13L450.2 564.97L451.0 565.16L451.8 564.98L452.6 564.98L453.4 565.21L454.2 565.09L455.0 565.26L455.8 565.26L456.6 565.32L457.4 565.26L458.2 565.33L459.0 565.22L459.8 565.24L460.6 565.27L461.4 565.21L462.2 565.29L463.0 565.26L463.8 565.24L464.6 565.31L465.4 565.07L466.2 565.26L467.0 565.24L467.8 565.02L468.6 564.99L469.4 565.08L470.2 565.06L471.0 565.14L471.8 565.18L472.6 564.98L473.4 565.07L474.2 565.09L475.0 564.80L475.8 565.13L476.6 565.00L477.4 564.86L478.2 564.87L479.0 565.11L479.8 564.89L480.6 564.97L481.4 564.96L482.2 564.87L483.0 564.94L483.8 565.03L484.6 565.00L485.4 565.11L486.2 565.11L487.0 565.07L487.8 565.14L488.6 565.22L489.4 565.32L490.2 565.16L491.0 565.27L491.8 565.26L492.6 565.30L493.4 565.25L494.2 565.28L495.0 565.19L495.8 565.23L496.6 565.23L497.4 565.16L498.2 565.22L499.0 565.17L499.8 565.10L500.6 565.07L501.4 565.03L502.2 564.96L503.0 565.03L503.8 564.99L504.6 565.09L505.4 565.05L506.2 564.95L507.0 564.90L507.8 564.71L508.6 565.05L509.4 564.91L510.2 564.72L511.0 564.84L511.8 564.66L512.6 564.97L513.4 564.71L514.2 564.87L515.0 564.83L515.8 565.06L516.6 564.94L517.4 564.81L518.2 564.87L519.0 564.97L519.8 565.05L520.7 565.20L521.5 565.03L522.3 565.14L523.1 565.10L523.9 565.16L524.7 565.23L525.5 565.15L526.3 565.32L527.1 565.16L527.9 565.34L528.7 565.17L529.5 565.24L530.3 565.25L531.1 565.13L531.9 565.20L532.7 565.18L533.5 565.27L534.3 565.04L535.1 565.04L535.9 565.13L536.7 565.14L537.5 565.01L538.3 564.77L539.1 564.76L539.9 564.89L540.7 565.05L541.5 564.67L542.3 564.94L543.1 564.68L543.9 564.78L544.7 564.55L545.5 564.94L546.3 564.64L547.1 564.69L547.9 565.03L548.7 564.80L549.5 564.94L550.3 564.80L551.1 564.73L551.9 564.88L552.7 564.98L553.5 564.98L554.3 565.13L555.1 565.09L555.9 565.22L556.7 565.09L557.5 565.28L558.3 565.19L559.1 565.29L559.9 565.22L560.7 565.34L561.5 565.35L562.3 565.23L563.1 565.21L563.9 565.18L564.7 565.21L565.5 565.13L566.3 565.30L567.1 565.17L567.9 565.15L568.7 565.24L569.5 565.23L570.3 565.19L571.1 565.08L571.9 564.98L572.7 564.98L573.5 565.00L574.3 565.15L575.1 564.91L575.9 564.97L576.7 565.08L577.5 564.91L578.3 565.04L579.1 565.02L579.9 564.96L580.7 564.85L581.5 565.10L582.3 564.99L583.1 565.07L583.9 564.93L584.7 564.90L585.5 565.11L586.3 564.98L587.1 565.08L587.9 565.18L588.7 565.18L589.5 565.13L590.3 565.08L591.1 565.15L591.9 565.31L592.7 565.15L593.5 565.21L594.3 565.26L595.1 565.30L595.9 565.27L596.7 565.22L597.5 565.30L598.3 565.33L599.1 565.17L599.9 565.25L600.7 565.32L601.5 565.11L602.3 565.28L603.1 565.19L603.9 565.10L604.7 565.06L605.5 564.96L606.3 565.15L607.1 565.00L607.9 564.86L608.7 564.98L609.5 564.85L610.3 564.93L611.1 564.80L611.9 564.68L612.7 564.93L613.5 564.75L614.3 564.91L615.1 564.67L615.9 564.73L616.7 564.70L617.5 564.70L618.3 564.84L619.1 564.72L619.9 565.06L620.7 564.92L621.5 565.13L622.3 564.98L623.1 564.98L623.9 565.14L624.7 565.02L625.5 565.16L626.3 565.24L627.1 565.26L627.9 565.20L628.7 565.26L629.5 565.34L630.3 565.29L631.1 565.16L631.9 565.26L632.7 565.21L633.5 565.25L634.3 565.32L635.1 565.17L635.9 565.25L636.7 565.24L637.5 565.08L638.3 565.02L639.1 565.20L639.9 564.85L640.7 565.14L641.5 565.06L642.3 564.96L643.1 564.74L643.9 564.73L644.7 564.70L645.5 564.82L646.3 564.58L647.1 564.94L647.9 564.53L648.7 564.98L649.5 564.93L650.3 564.66L651.1 564.67L651.9 564.74L652.7 564.95L653.5 564.72L654.3 564.90L655.1 565.05L655.9 565.12L656.7 564.84L657.5 565.19L658.3 565.17L659.1 565.16L659.9 565.04L660.7 565.09L661.5 565.12L662.3 565.19L663.1 565.34L663.9 565.20L664.7 565.32L665.6 565.17L666.4 565.16L667.2 565.34L668.0 565.19L668.8 565.28L669.6 565.30L670.4 565.10L671.2 565.19L672.0 565.20L672.8 565.11L673.6 565.23L674.4 565.10L675.2 565.00L676.0 564.91L676.8 565.14L677.6 564.85L678.4 565.11L679.2 565.07L680.0 565.01L680.8 565.06L681.6 565.09L682.4 564.87L683.2 564.97L684.0 565.06L684.8 564.94L685.6 565.10L686.4 564.91L687.2 564.83L688.0 565.02L688.8 565.06L689.6 565.08L690.4 565.11L691.2 565.12L692.0 565.21L692.8 565.20L693.6 565.12L694.4 565.19L695.2 565.30L696.0 565.30L696.8 565.16L697.6 565.27L698.4 565.19L699.2 565.23L700.0 565.23L700.8 565.29L701.6 565.24L702.4 565.26L703.2 565.23L704.0 565.12L704.8 565.29L705.6 565.25L706.4 565.06L707.2 565.02L708.0 565.02L708.8 564.97L709.6 565.18L710.4 564.95L711.2 565.13L712.0 564.85L712.8 564.99L713.6 564.93L714.4 564.90L715.2 565.01L716.0 564.85L716.8 564.72L717.6 564.89L718.4 564.89L719.2 564.93L720.0 565.01L720.8 564.98L721.6 564.77L722.4 564.74L723.2 565.00L724.0 565.05L724.8 565.06L725.6 564.91L726.4 565.13L727.2 565.18L728.0 565.17L728.8 565.26L729.6 565.26L730.4 565.26L731.2 565.19L732.0 565.15L732.8 565.30L733.6 565.30L734.4 565.24L735.2 565.35L736.0 565.33L736.8 565.22L737.6 565.23L737.6 565.6z" fill="#a4d884"/></svg>
<div style="left:157.6px;top:520px;width:9.2px;height:11.3px;background:#1e3a0c;"></div>
<span id="t36" class="t" style="left:159.8px;top:520.30px;font-size:9.5px;line-height:11px;color:#f0f0f0;font-weight:400;">1</span>
<div style="left:158px;top:574.9px;width:866px;height:1.7px;background:#a8a8a8;"></div>
<svg style="left:477.3px;top:346px;" width="13" height="12" viewBox="0 0 13 12"><path d="M1.100 0.900h9.300v7.400L5.750 11.400 1.100 8.300z" fill="#3f95ef"/><path d="M6 10.300l4.500-1.200 1.300 1.200z" fill="#3f95ef"/></svg>
<div style="left:482.55px;top:356px;width:1.1px;height:233px;background:#2f84de;"></div>
<svg style="left:14.0px;top:367.3px;" width="11" height="13" viewBox="0 0 11 13"><path d="M2.300 6V3.600a2.400 2.400 0 0 1 4.700-.600" fill="none" stroke="#b6b6b6" stroke-width="1.300"/><rect x="0.800" y="5.700" width="8.800" height="6.500" rx="0.800" fill="#b6b6b6"/><path d="M5.200 7.600v2.800" stroke="#1d1d1d" stroke-width="1.500"/></svg>
<span id="t37" class="t" style="left:35.2px;top:368.60px;font-size:8.7px;line-height:12px;color:#c0c0c0;font-weight:400;letter-spacing:-0.220px;">V2</span>
<svg style="left:55.7px;top:369.2px;" width="12" height="9" viewBox="0 0 12 9"><rect x="0.600" y="0.600" width="6.800" height="3" fill="none" stroke="#b6b6b6" stroke-width="1.100"/><rect x="0.600" y="5.300" width="6.800" height="3" fill="none" stroke="#b6b6b6" stroke-width="1.100"/><path d="M7.400 1.500h3.400v6H7.400" fill="none" stroke="#b6b6b6" stroke-width="1.200"/></svg>
<svg style="left:75.7px;top:371.1px;" width="12" height="7" viewBox="0 0 12 7"><path d="M0.600 3.500C2.300 1.100 4.200 0.600 6 0.600S9.700 1.100 11.400 3.500C9.700 5.900 7.800 6.400 6 6.400S2.300 5.900 0.600 3.500z" fill="none" stroke="#d4d4d4" stroke-width="1.250"/><circle cx="6" cy="3.500" r="1.900" fill="#d4d4d4"/></svg>
<svg style="left:14.0px;top:407.2px;" width="11" height="13" viewBox="0 0 11 13"><path d="M2.300 6V3.600a2.400 2.400 0 0 1 4.700-.600" fill="none" stroke="#b6b6b6" stroke-width="1.300"/><rect x="0.800" y="5.700" width="8.800" height="6.500" rx="0.800" fill="#b6b6b6"/><path d="M5.200 7.600v2.800" stroke="#1d1d1d" stroke-width="1.500"/></svg>
<div style="left:29.7px;top:392.9px;width:21.3px;height:42.6px;background:#0b5dd0;border-radius:3px;"></div>
<span id="t38" class="t" style="left:35.2px;top:408.50px;font-size:8.7px;line-height:12px;color:#f4f4f4;font-weight:400;letter-spacing:-0.220px;">V1</span>
<svg style="left:55.7px;top:398.5px;" width="12" height="9" viewBox="0 0 12 9"><rect x="0.600" y="0.600" width="6.800" height="3" fill="none" stroke="#b6b6b6" stroke-width="1.100"/><rect x="0.600" y="5.300" width="6.800" height="3" fill="none" stroke="#b6b6b6" stroke-width="1.100"/><path d="M7.400 1.500h3.400v6H7.400" fill="none" stroke="#b6b6b6" stroke-width="1.200"/></svg>
<svg style="left:75.7px;top:400.2px;" width="12" height="7" viewBox="0 0 12 7"><path d="M0.600 3.500C2.300 1.100 4.200 0.600 6 0.600S9.700 1.100 11.400 3.500C9.700 5.900 7.800 6.400 6 6.400S2.300 5.900 0.600 3.500z" fill="none" stroke="#d4d4d4" stroke-width="1.250"/><circle cx="6" cy="3.500" r="1.900" fill="#d4d4d4"/></svg>
<span id="t39" class="t" style="left:54.4px;top:418.95px;font-size:9.5px;line-height:13.5px;color:#cfcfcf;font-weight:400;letter-spacing:0.034px;">Video 1</span>
<svg style="left:14.0px;top:449.0px;" width="11" height="13" viewBox="0 0 11 13"><path d="M2.300 6V3.600a2.400 2.400 0 0 1 4.700-.600" fill="none" stroke="#b6b6b6" stroke-width="1.300"/><rect x="0.800" y="5.700" width="8.800" height="6.500" rx="0.800" fill="#b6b6b6"/><path d="M5.200 7.600v2.800" stroke="#1d1d1d" stroke-width="1.500"/></svg>
<span id="t40" class="t" style="left:35.2px;top:450.30px;font-size:8.7px;line-height:12px;color:#c0c0c0;font-weight:400;letter-spacing:-0.220px;">A1</span>
<svg style="left:55.7px;top:450.8px;" width="12" height="9" viewBox="0 0 12 9"><rect x="0.600" y="0.600" width="6.800" height="3" fill="none" stroke="#b6b6b6" stroke-width="1.100"/><rect x="0.600" y="5.300" width="6.800" height="3" fill="none" stroke="#b6b6b6" stroke-width="1.100"/><path d="M7.400 1.500h3.400v6H7.400" fill="none" stroke="#b6b6b6" stroke-width="1.200"/></svg>
<span id="t41" class="t" style="left:79px;top:450.30px;font-size:8.8px;line-height:12px;color:#a8a8a8;font-weight:400;letter-spacing:-0.028px;">M</span>
<span id="t42" class="t" style="left:101.3px;top:450.30px;font-size:8.8px;line-height:12px;color:#a8a8a8;font-weight:400;letter-spacing:-0.075px;">S</span>
<svg style="left:119.7px;top:449.5px;" width="10" height="14" viewBox="0 0 10 14"><rect x="2.800" y="0.300" width="4.400" height="8" rx="2.200" fill="#b6b6b6"/><path d="M0.800 5.500v1a4.200 4.200 0 0 0 8.400 0v-1M5 10.700v2.300M2.300 13.200h5.400" fill="none" stroke="#b6b6b6" stroke-width="0.900"/></svg>
<svg style="left:14.0px;top:480.6px;" width="11" height="13" viewBox="0 0 11 13"><path d="M2.300 6V3.600a2.400 2.400 0 0 1 4.700-.600" fill="none" stroke="#b6b6b6" stroke-width="1.300"/><rect x="0.800" y="5.700" width="8.800" height="6.500" rx="0.800" fill="#b6b6b6"/><path d="M5.200 7.600v2.800" stroke="#1d1d1d" stroke-width="1.500"/></svg>
<div style="left:29.7px;top:472.5px;width:21.3px;height:30.2px;background:#0b5dd0;border-radius:3px;"></div>
<span id="t43" class="t" style="left:35.2px;top:481.90px;font-size:8.7px;line-height:12px;color:#f4f4f4;font-weight:400;letter-spacing:-0.220px;">A2</span>
<svg style="left:55.7px;top:482.40000000000003px;" width="12" height="9" viewBox="0 0 12 9"><rect x="0.600" y="0.600" width="6.800" height="3" fill="none" stroke="#b6b6b6" stroke-width="1.100"/><rect x="0.600" y="5.300" width="6.800" height="3" fill="none" stroke="#b6b6b6" stroke-width="1.100"/><path d="M7.400 1.500h3.400v6H7.400" fill="none" stroke="#b6b6b6" stroke-width="1.200"/></svg>
<span id="t44" class="t" style="left:79px;top:481.90px;font-size:8.8px;line-height:12px;color:#a8a8a8;font-weight:400;letter-spacing:-0.028px;">M</span>
<span id="t45" class="t" style="left:101.3px;top:481.90px;font-size:8.8px;line-height:12px;color:#a8a8a8;font-weight:400;letter-spacing:-0.075px;">S</span>
<svg style="left:119.7px;top:481.1px;" width="10" height="14" viewBox="0 0 10 14"><rect x="2.800" y="0.300" width="4.400" height="8" rx="2.200" fill="#b6b6b6"/><path d="M0.800 5.500v1a4.200 4.200 0 0 0 8.400 0v-1M5 10.700v2.300M2.300 13.200h5.400" fill="none" stroke="#b6b6b6" stroke-width="0.900"/></svg>
<svg style="left:14.0px;top:512.4px;" width="11" height="13" viewBox="0 0 11 13"><path d="M2.300 6V3.600a2.400 2.400 0 0 1 4.700-.600" fill="none" stroke="#b6b6b6" stroke-width="1.300"/><rect x="0.800" y="5.700" width="8.800" height="6.500" rx="0.800" fill="#b6b6b6"/><path d="M5.200 7.600v2.800" stroke="#1d1d1d" stroke-width="1.500"/></svg>
<div style="left:29.7px;top:504.29999999999995px;width:21.3px;height:30.2px;background:#0b5dd0;border-radius:3px;"></div>
<span id="t46" class="t" style="left:35.2px;top:513.70px;font-size:8.7px;line-height:12px;color:#f4f4f4;font-weight:400;letter-spacing:-0.220px;">A3</span>
<svg style="left:55.7px;top:514.1999999999999px;" width="12" height="9" viewBox="0 0 12 9"><rect x="0.600" y="0.600" width="6.800" height="3" fill="none" stroke="#b6b6b6" stroke-width="1.100"/><rect x="0.600" y="5.300" width="6.800" height="3" fill="none" stroke="#b6b6b6" stroke-width="1.100"/><path d="M7.400 1.500h3.400v6H7.400" fill="none" stroke="#b6b6b6" stroke-width="1.200"/></svg>
<span id="t47" class="t" style="left:79px;top:513.70px;font-size:8.8px;line-height:12px;color:#a8a8a8;font-weight:400;letter-spacing:-0.028px;">M</span>
<span id="t48" class="t" style="left:101.3px;top:513.70px;font-size:8.8px;line-height:12px;color:#a8a8a8;font-weight:400;letter-spacing:-0.075px;">S</span>
<svg style="left:119.7px;top:512.9px;" width="10" height="14" viewBox="0 0 10 14"><rect x="2.800" y="0.300" width="4.400" height="8" rx="2.200" fill="#b6b6b6"/><path d="M0.800 5.500v1a4.200 4.200 0 0 0 8.400 0v-1M5 10.700v2.300M2.300 13.200h5.400" fill="none" stroke="#b6b6b6" stroke-width="0.900"/></svg>
<svg style="left:14.0px;top:544.2px;" width="11" height="13" viewBox="0 0 11 13"><path d="M2.300 6V3.600a2.400 2.400 0 0 1 4.700-.600" fill="none" stroke="#b6b6b6" stroke-width="1.300"/><rect x="0.800" y="5.700" width="8.800" height="6.500" rx="0.800" fill="#b6b6b6"/><path d="M5.200 7.600v2.800" stroke="#1d1d1d" stroke-width="1.500"/></svg>
<div style="left:29.7px;top:536.1px;width:21.3px;height:30.2px;background:#0b5dd0;border-radius:3px;"></div>
<span id="t49" class="t" style="left:35.2px;top:545.50px;font-size:8.7px;line-height:12px;color:#f4f4f4;font-weight:400;letter-spacing:-0.220px;">A4</span>
<svg style="left:55.7px;top:546.0px;" width="12" height="9" viewBox="0 0 12 9"><rect x="0.600" y="0.600" width="6.800" height="3" fill="none" stroke="#b6b6b6" stroke-width="1.100"/><rect x="0.600" y="5.300" width="6.800" height="3" fill="none" stroke="#b6b6b6" stroke-width="1.100"/><path d="M7.400 1.500h3.400v6H7.400" fill="none" stroke="#b6b6b6" stroke-width="1.200"/></svg>
<span id="t50" class="t" style="left:79px;top:545.50px;font-size:8.8px;line-height:12px;color:#a8a8a8;font-weight:400;letter-spacing:-0.028px;">M</span>
<span id="t51" class="t" style="left:101.3px;top:545.50px;font-size:8.8px;line-height:12px;color:#a8a8a8;font-weight:400;letter-spacing:-0.075px;">S</span>
<svg style="left:119.7px;top:544.7px;" width="10" height="14" viewBox="0 0 10 14"><rect x="2.800" y="0.300" width="4.400" height="8" rx="2.200" fill="#b6b6b6"/><path d="M0.800 5.500v1a4.200 4.200 0 0 0 8.400 0v-1M5 10.700v2.300M2.300 13.200h5.400" fill="none" stroke="#b6b6b6" stroke-width="0.900"/></svg>
<svg style="left:14.0px;top:575.5px;" width="11" height="13" viewBox="0 0 11 13"><path d="M2.300 6V3.600a2.400 2.400 0 0 1 4.700-.600" fill="none" stroke="#b6b6b6" stroke-width="1.300"/><rect x="0.800" y="5.700" width="8.800" height="6.500" rx="0.800" fill="#b6b6b6"/><path d="M5.200 7.600v2.800" stroke="#1d1d1d" stroke-width="1.500"/></svg>
<span id="t52" class="t" style="left:33.6px;top:576.60px;font-size:9.5px;line-height:12px;color:#c8c8c8;font-weight:400;letter-spacing:0.273px;">Mix</span>
<span id="t53" class="t" style="left:87.2px;top:576.80px;font-size:9.6px;line-height:12px;color:#3f94ea;font-weight:400;letter-spacing:-0.381px;">0.0</span>
<svg style="left:140.5px;top:578px;" width="12" height="10" viewBox="0 0 12 10"><path d="M0.300 0.500L5.500 4.600 0.300 9zM11.500 0.500L6.300 4.600 11.500 9z" fill="#c4c4c4"/><path d="M5.900 0.500v8.500" stroke="#c4c4c4" stroke-width="1"/></svg>
</div></body></html>
